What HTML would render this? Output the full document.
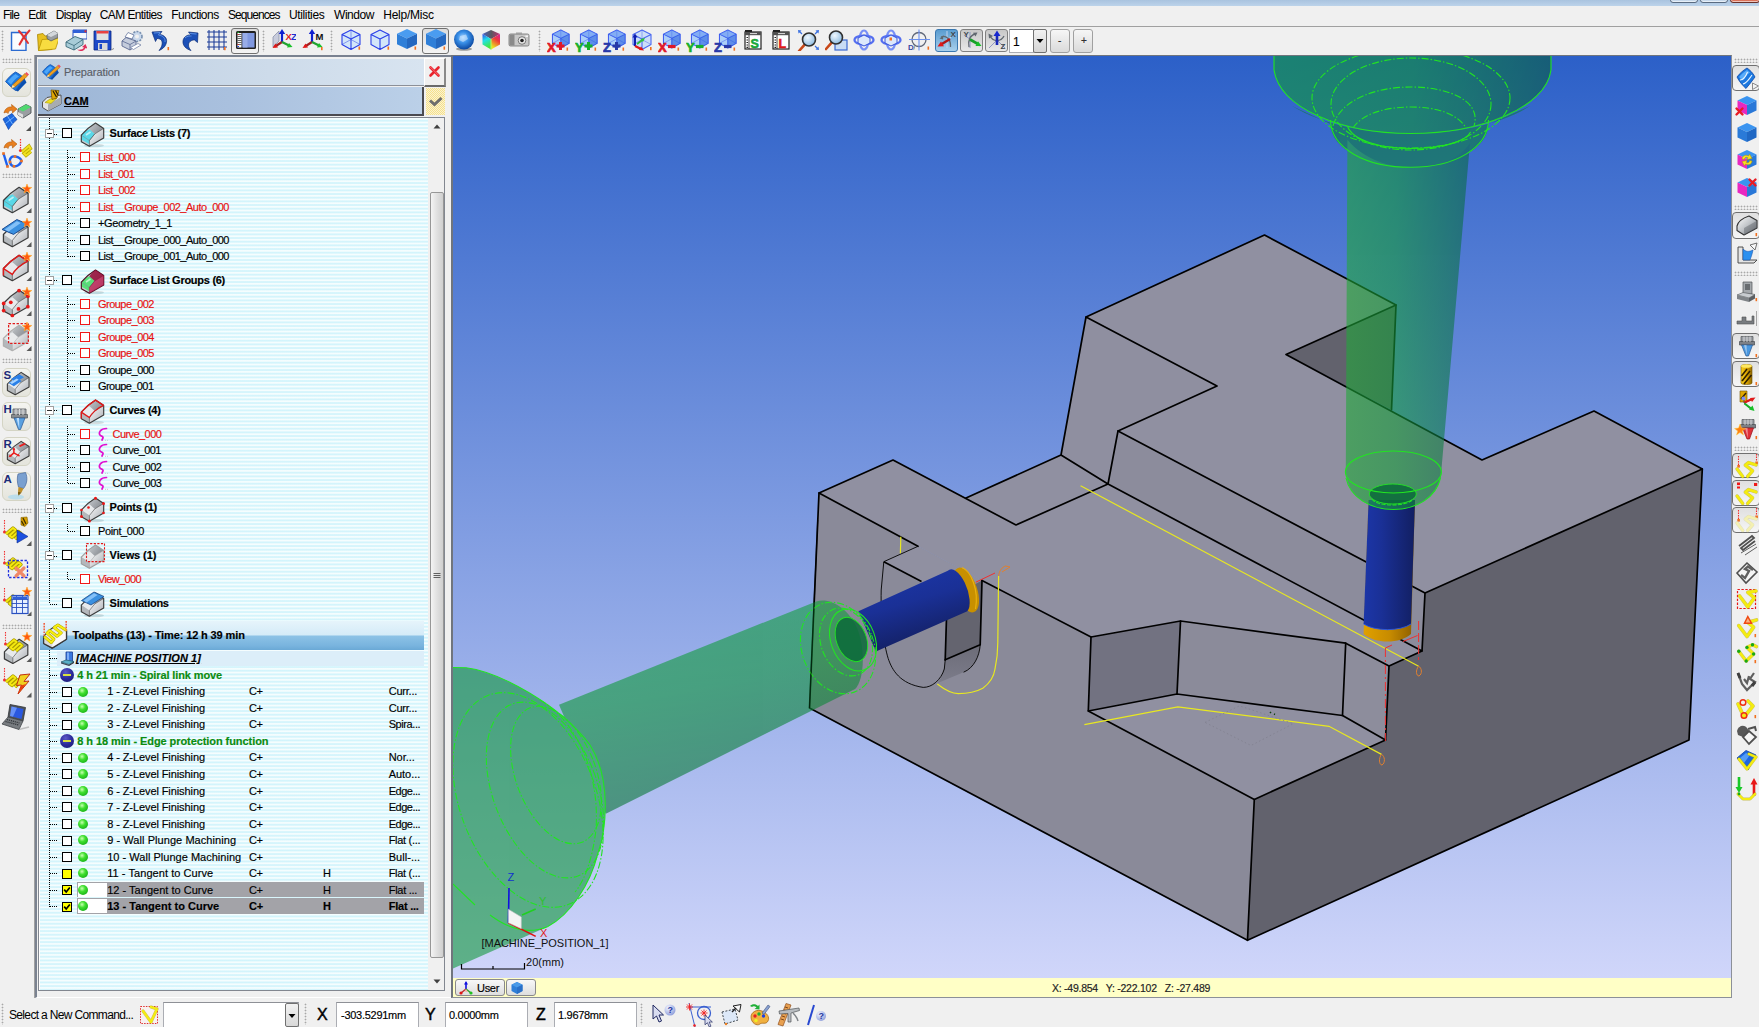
<!DOCTYPE html>
<html lang="en">
<head>
<meta charset="utf-8">
<title>CAM Workspace</title>
<style>
*{box-sizing:border-box;margin:0;padding:0}
html,body{width:1759px;height:1027px;overflow:hidden;background:#f0f0f0;font-family:"Liberation Sans",sans-serif;font-size:11px;color:#000}
.abs{position:absolute}
#app{position:relative;width:1759px;height:1027px;overflow:hidden;background:#f0f0f0}
#titlestrip{left:0;top:0;width:1759px;height:6px;background:linear-gradient(#a9c3df,#bcd3ea)}
.winbtn{top:-6px;height:9px;border:1px solid #5a6b80;border-radius:3px;background:linear-gradient(#d4e2f1,#c3d6ea);box-shadow:inset 0 0 0 1px rgba(255,255,255,.6)}
#menubar{left:0;top:6px;width:1759px;height:20px;background:#f0f0f0}
#menubar span{-webkit-text-stroke:0.04px currentColor;position:absolute;top:2px;font-size:12px;letter-spacing:-0.35px;white-space:nowrap;color:#000}
#menuline{left:0;top:26px;width:1759px;height:1px;background:#a0a0a0}
#toolbar{left:0;top:27px;width:1759px;height:28px;background:#f0f0f0}
.grip-v{width:5px;height:22px;background-image:radial-gradient(circle,#a8a8a8 0.8px,transparent 1.1px);background-size:3px 3px}
.grip-h{height:5px;width:22px;background-image:radial-gradient(circle,#a8a8a8 0.8px,transparent 1.1px);background-size:3px 3px}
.tb{position:absolute;width:24px;height:24px}
.tb svg,.lt svg,.rt svg{display:block;overflow:visible}
.pressed{border:1px solid #707070;border-radius:3px;background:linear-gradient(#dcdcdc,#f4f4f4)}
.lt{position:absolute;left:2px;width:30px;height:30px}
.ltbtn{position:absolute;left:2px;width:29px;height:29px;border:1px solid #d4d4c4;border-radius:6px;background:linear-gradient(#f4f4f0,#e4e4dc)}
.rt{position:absolute;left:1733px;width:26px;height:24px}
.rtbtn{position:absolute;left:1732px;width:28px;border:1px solid #707070;border-radius:4px;background:linear-gradient(#e0e0e0,#f6f6f6)}
/* panel */
#panelframe{left:35px;top:55px;width:417px;height:943px;background:#f0f0f0;border-left:2px solid #7a8290;border-top:2px solid #7a8290;border-right:1px solid #fff;border-bottom:1px solid #fff}
#prep{left:38px;top:59px;width:386px;height:27px;background:linear-gradient(90deg,#bccde0,#cddbea 60%,#d8e4f0);border-bottom:1px solid #8c9098}
#camrow{left:38px;top:87px;width:386px;height:29px;background:linear-gradient(90deg,#9db6d6,#a9c0de 50%,#bbd0e8);border-right:2px solid #4a4a50;border-bottom:2px solid #4a4a50}
#xbtn{left:424px;top:58px;width:22px;height:29px;background:#f0f0f0;border-top:1px solid #fff;border-left:1px solid #fff;border-right:2px solid #8a8a8a;border-bottom:2px solid #6a6a6a}
#chkbtn{left:426px;top:88px;width:19px;height:27px;background-color:#f7e7a0;background-image:conic-gradient(#fbf3d0 25%,#f5e08c 0 50%,#fbf3d0 0 75%,#f5e08c 0);background-size:2px 2px}
#tree{left:38px;top:117px;width:407px;height:874px;border:1px solid #828790;background-color:#fff;overflow:hidden}
#treebg{left:1px;top:-1.07px;width:388px;height:876px;background-image:repeating-linear-gradient(#d2f4fc 0,#d6f5fc 0.5px,#f5fdfe 1.5px,#f5fdfe 2.2px,#d6f5fc 3.2px,#d2f4fc 3.667px)}
#scroll{left:389px;top:0px;width:17px;height:872px;background:#f0f0f0}
#thumb{left:391px;top:74px;width:14px;height:766px;border:1px solid #979797;border-radius:2px;background:linear-gradient(90deg,#f4f4f4,#e0e0e0 50%,#cfcfcf)}
.row{position:absolute;left:0;height:16px;white-space:nowrap}
.cb{position:absolute;width:10px;height:10px;border:1px solid #000;background:#fff}
.cb.r{border-color:#f01818}
.cb.y{background:#ffff00}
.t{-webkit-text-stroke:0.16px currentColor;position:absolute;font-size:11px;white-space:nowrap;line-height:14px;letter-spacing:-0.25px}
.red{color:#e81010}
.b{font-weight:bold}
.grn{color:#0a8a10}
.dv{position:absolute;width:1px;background-image:linear-gradient(#000 50%,transparent 50%);background-size:1px 2px}
.dh{position:absolute;height:1px;background-image:linear-gradient(90deg,#000 50%,transparent 50%);background-size:2px 1px}
.ball{position:absolute;width:10px;height:10px;border-radius:50%;background:radial-gradient(circle at 40% 35%,#c8ffb0 0,#40e030 35%,#18b018 80%,#109010 100%)}
.minus{position:absolute;width:14px;height:14px;border-radius:50%;background:radial-gradient(circle at 40% 30%,#5a5ac8 0,#2a2a9a 50%,#18186a 100%)}
.minus i{position:absolute;left:3px;top:6px;width:8px;height:2px;background:#d8e040}
/* bottom */
#bottombar{left:0;top:998px;width:1759px;height:29px;background:#f0f0f0}
.inp{position:absolute;top:1002px;height:26px;background:#fff;border:1px solid #abadb3;border-top-color:#8e9096}
.lbl{position:absolute;font-size:16px;top:1006px;color:#000;-webkit-text-stroke:0.45px #000}
#statusbar{left:453px;top:978px;width:1277.5px;height:19px;background:#ffffc6}
#vpborder{left:451px;top:55px;width:1281px;height:943px;border-left:2px solid #70757d;border-top:1px solid #70757d;border-right:1px solid #8c9098;border-bottom:1px solid #8c9098}
#vp{left:453px;top:56px;width:1277.5px;height:922px;overflow:hidden;background:linear-gradient(#2c60c8,#d0d6fa)}
</style>
</head>
<body>
<div id="app">
<div id="titlestrip" class="abs"></div>
<div class="abs winbtn" style="left:1670px;width:28px;"></div>
<div class="abs winbtn" style="left:1700px;width:28px;"></div>
<div class="abs winbtn" style="left:1730px;width:30px;background:linear-gradient(#e8a090,#d8664c);border-color:#6a3028;"></div>
<div id="menubar" class="abs">
<span style="left:3px;letter-spacing:-0.83px">File</span>
<span style="left:28.3px;letter-spacing:-0.82px">Edit</span>
<span style="left:55.7px;letter-spacing:-0.65px">Display</span>
<span style="left:99.8px;letter-spacing:-0.60px">CAM Entities</span>
<span style="left:171.3px;letter-spacing:-0.52px">Functions</span>
<span style="left:228px;letter-spacing:-0.94px">Sequences</span>
<span style="left:289px;letter-spacing:-0.37px">Utilities</span>
<span style="left:334px;letter-spacing:-0.45px">Window</span>
<span style="left:383.3px;letter-spacing:-0.26px">Help/Misc</span>
</div>
<div id="menuline" class="abs"></div>
<div id="toolbar" class="abs"></div>
<div id="panelframe" class="abs"></div>
<div id="prep" class="abs"><svg class="abs" style="left:2px;top:2px" width="22" height="22" viewBox="0 0 28 26"><path d="M3 13 C6 9 9 6 13 3.5 C16 5 19 7 22 10 C19 14 16 18 13 22 C9 19 6 16 3 13Z" fill="#1c78e0" stroke="#0c4aa8" stroke-width="0.8"/><path d="M5 13 C8 9.5 10 7.5 13 5.5 L16.5 8 C13 10 11 12.5 8.5 16Z" fill="#58b0ff" opacity="0.8"/><path d="M13 22 C16 18 19 14 22 10 L24 14 C21 17 18 20 15.5 23Z" fill="#0c50b0"/><path d="M10 16.5 L22.5 5 L25 7.5 L12.5 18.5 L9 19.5Z" fill="#f0a020" stroke="#a86000" stroke-width="0.6"/><path d="M22.5 5 L24 3.5 L26.5 6 L25 7.5Z" fill="#f05060"/><path d="M10 16.5 L12.5 18.5 L9 19.5Z" fill="#f8e8c0"/></svg><span class="t" style="left:26px;top:6px;font-size:11px;color:#5a6068;letter-spacing:-0.1px">Preparation</span></div>
<div id="camrow" class="abs"><svg class="abs" style="left:3px;top:2px" width="22" height="24" viewBox="0 0 22 24"><path d="M1.500 13 L6 8.500 L20 6 L20 15 L7 22 L1.500 18.500Z" fill="#e4e4e4" stroke="#505050" stroke-width="1"/><path d="M7 15.500 L20 8 L20 15 L7 22Z" fill="#a8acb0"/><path d="M4 13.500 L9 10 L16 9 L10 14.500Z" fill="#f0e020" stroke="#a89800" stroke-width="0.600"/><path d="M10 1 L18 1.500 L16 9 L11 10.500Z" fill="#e0a800" stroke="#705000" stroke-width="0.700"/><path d="M12 2 L15.500 8 M14.500 1.500 L17 6" stroke="#302000" stroke-width="1.300"/></svg><span class="t b" style="left:26px;top:7px;font-size:11px;text-decoration:underline;letter-spacing:-0.2px">CAM</span></div>
<div id="xbtn" class="abs"><svg width="19" height="26" viewBox="0 0 19 26"><path d="M5.5 8.5 L13.5 16.5 M13.5 8.5 L5.5 16.5" stroke="#e8242c" stroke-width="2.6" stroke-linecap="round"/><path d="M5.5 8.2 L13.5 16.2" stroke="#ff8088" stroke-width="0.8" stroke-linecap="round"/></svg></div>
<div id="chkbtn" class="abs"><svg width="19" height="27" viewBox="0 0 19 27"><path d="M4 12.5 L8.5 16.5 L15.5 10" fill="none" stroke="#6e6e6e" stroke-width="3"/></svg></div>
<div id="bottombar" class="abs"></div>
<div class="abs grip-v" style="left:1px;top:1003px;width:3px;height:22px"></div>
<span class="abs" style="left:9px;top:1008px;font-size:12px;letter-spacing:-0.66px;white-space:nowrap">Select a New Command...</span>
<div class="inp" style="left:163px;width:136px"></div>
<div class="abs" style="left:285px;top:1003px;width:14px;height:24px;border:1px solid #707070;border-radius:2px;background:linear-gradient(#f2f2f2,#d8d8d8)"><svg width="12" height="22"><path d="M2.5 10 L9.5 10 L6 14 Z" fill="#000"/></svg></div>
<div class="abs grip-v" style="left:304px;top:1003px;width:3px;height:22px"></div>
<span class="lbl" style="left:317px">X</span>
<div class="inp" style="left:336px;width:83px"><span class="t" style="left:4px;top:5px;letter-spacing:-0.27px">-303.5291mm</span></div>
<span class="lbl" style="left:425px">Y</span>
<div class="inp" style="left:445px;width:83px"><span class="t" style="left:3px;top:5px;letter-spacing:-0.3px">0.0000mm</span></div>
<span class="lbl" style="left:536px">Z</span>
<div class="inp" style="left:554px;width:83px"><span class="t" style="left:3px;top:5px;letter-spacing:-0.3px">1.9678mm</span></div>
<div class="abs grip-v" style="left:640px;top:1003px;width:3px;height:22px"></div>
<div id="vpborder" class="abs"></div>
<div id="statusbar" class="abs"><span class="t" style="left:599px;top:3px;font-size:10.5px;letter-spacing:-0.25px;color:#222">X: -49.854&nbsp;&nbsp; Y: -222.102&nbsp;&nbsp; Z: -27.489</span>
<div class="abs" style="left:2px;top:1px;width:50px;height:17px;border:1px solid #8a8a8a;border-radius:3px;background:linear-gradient(#f8f8f8,#dedede)"><svg class="abs" style="left:3px;top:1px" width="14" height="14" viewBox="0 0 14 14"><path d="M7 8 L7 1.5" stroke="#1010e0" stroke-width="1.6"/><path d="M7 0 L5 3.5 L9 3.5Z" fill="#1010e0"/><path d="M7 8 L2 12" stroke="#c03030" stroke-width="1.6"/><circle cx="2" cy="12" r="1.6" fill="#e01818"/><path d="M7 8 L12 12" stroke="#30a030" stroke-width="1.6"/><circle cx="12" cy="12" r="1.6" fill="#20c020"/><path d="M7 8 L9 11 L5.5 10.5Z" fill="#f0b0a0"/></svg><span class="t" style="left:21px;top:1px;letter-spacing:-0.3px">User</span></div>
<div class="abs" style="left:53px;top:1px;width:30px;height:17px;border:1px solid #8a8a8a;border-radius:3px;background:linear-gradient(#f8f8f8,#dedede)"><svg class="abs" style="left:3px;top:1px" width="14" height="14" viewBox="0 0 14 14"><path d="M7 1 L12.5 3.8 L12.5 10 L7 13 L1.5 10 L1.5 3.8Z" fill="#2f7fd8"/><path d="M7 1 L12.5 3.8 L7 6.5 L1.5 3.8Z" fill="#4a9ae8"/><path d="M7 6.5 L12.5 3.8 L12.5 10 L7 13Z" fill="#2a70c8"/></svg></div>
</div>
<div id="tree" class="abs">
<div id="treebg" class="abs"></div>
<div class="dv" style="left:10px;top:0px;height:486px"></div>
<div class="abs" style="left:6px;top:11.2px;width:9px;height:9px;border:1px solid #a0a0a0;background:#fff"><div class="abs" style="left:1px;top:3px;width:5px;height:1px;background:#303030"></div></div>
<div class="dh" style="left:15px;top:16px;width:4px"></div>
<div class="cb " style="left:23.0px;top:10.2px"></div>
<div class="abs" style="left:41px;top:3.2px;width:26px;height:26px"><svg width="26" height="27" viewBox="0 0 26 27"><defs><linearGradient id="g1" x1="0" y1="0" x2="1" y2="1"><stop offset="0" stop-color="#ffffff"/><stop offset="1" stop-color="#a8acb2"/></linearGradient><linearGradient id="g2" x1="0" y1="0" x2="1" y2="0.6"><stop offset="0" stop-color="#c4c8cc"/><stop offset="1" stop-color="#888c92"/></linearGradient></defs><ellipse cx="14" cy="24.5" rx="10" ry="1.8" fill="#000" opacity="0.12"/><path d="M1.3 14.1 C4 11 10 5.5 15.5 2.1 L23.7 7.4 L23.7 17.1 L9.4 25.2 L1.3 20.8 Z" fill="#c8ccd0"/><path d="M15.5 2.1 L23.7 7.4 L14.7 13 L9.4 8.3 C11 6 13 4 15.5 2.1Z" fill="url(#g2)"/><path d="M14.7 13 L23.7 7.4 L23.7 17.1 L9.4 25.2 L9.4 19.5 Z" fill="url(#g1)"/><path d="M1.3 14.1 C3 12 6 10 9.4 8.3 L14.7 13 L9.4 19.5 Z" fill="#5ad8e8"/><path d="M1.3 14.1 L9.4 19.5 L9.4 25.2 L1.3 20.8 Z" fill="#5ad8e8"/><path d="M1.3 18.5 L9.4 23.2 L9.4 25.2 L1.3 20.8Z" fill="#c8ccd0"/><path d="M6 14 L10.5 11" stroke="#fff" stroke-width="1.6" opacity="0.6"/><path d="M1.3 14.1 L9.4 19.5 L14.7 13" fill="none" stroke="#688" stroke-width="0.5"/><path d="M1.3 14.1 C4 11 10 5.5 15.5 2.1 L23.7 7.4 L23.7 17.1 L9.4 25.2 L1.3 20.8 Z" fill="none" stroke="#3c3c3c" stroke-width="1.15" stroke-linejoin="round"/><path d="M9.4 19.5 L14.7 13 L23.7 7.4 M9.4 19.5 V25.2" fill="none" stroke="#3c3c3c" stroke-width="0.7" opacity="0.75"/></svg></div>
<span class="t" style="left:70.6px;top:8.1px;font-size:11px;letter-spacing:-0.30px;font-weight:bold;">Surface Lists (7)</span>
<div class="dv" style="left:28px;top:32px;height:108px"></div>
<div class="dh" style="left:29px;top:39px;width:8px"></div>
<div class="cb r" style="left:41.0px;top:34.0px"></div>
<span class="t" style="left:59.0px;top:32.0px;font-size:11px;letter-spacing:-0.57px;color:#e81010;">List_000</span>
<div class="dh" style="left:29px;top:56px;width:8px"></div>
<div class="cb r" style="left:41.0px;top:50.6px"></div>
<span class="t" style="left:59.0px;top:48.5px;font-size:11px;letter-spacing:-0.67px;color:#e81010;">List_001</span>
<div class="dh" style="left:29px;top:72px;width:8px"></div>
<div class="cb r" style="left:41.0px;top:67.1px"></div>
<span class="t" style="left:59.0px;top:65.1px;font-size:11px;letter-spacing:-0.57px;color:#e81010;">List_002</span>
<div class="dh" style="left:29px;top:89px;width:8px"></div>
<div class="cb r" style="left:41.0px;top:83.7px"></div>
<span class="t" style="left:59.0px;top:81.6px;font-size:11px;letter-spacing:-0.51px;color:#e81010;">List__Groupe_002_Auto_000</span>
<div class="dh" style="left:29px;top:105px;width:8px"></div>
<div class="cb " style="left:41.0px;top:100.2px"></div>
<span class="t" style="left:59.0px;top:98.2px;font-size:11px;letter-spacing:-0.40px;">+Geometry_1_1</span>
<div class="dh" style="left:29px;top:122px;width:8px"></div>
<div class="cb " style="left:41.0px;top:116.8px"></div>
<span class="t" style="left:59.0px;top:114.7px;font-size:11px;letter-spacing:-0.51px;">List__Groupe_000_Auto_000</span>
<div class="dh" style="left:29px;top:138px;width:8px"></div>
<div class="cb " style="left:41.0px;top:133.3px"></div>
<span class="t" style="left:59.0px;top:131.3px;font-size:11px;letter-spacing:-0.51px;">List__Groupe_001_Auto_000</span>
<div class="abs" style="left:6px;top:157.7px;width:9px;height:9px;border:1px solid #a0a0a0;background:#fff"><div class="abs" style="left:1px;top:3px;width:5px;height:1px;background:#303030"></div></div>
<div class="dh" style="left:15px;top:162px;width:4px"></div>
<div class="cb " style="left:23.0px;top:156.7px"></div>
<div class="abs" style="left:41px;top:149.7px;width:26px;height:26px"><svg width="26" height="27" viewBox="0 0 26 27"><defs><linearGradient id="g3" x1="0" y1="0" x2="1" y2="1"><stop offset="0" stop-color="#ffffff"/><stop offset="1" stop-color="#a8acb2"/></linearGradient><linearGradient id="g4" x1="0" y1="0" x2="1" y2="0.6"><stop offset="0" stop-color="#c4c8cc"/><stop offset="1" stop-color="#888c92"/></linearGradient></defs><ellipse cx="14" cy="24.5" rx="10" ry="1.8" fill="#000" opacity="0.12"/><path d="M1.3 14.1 C4 11 10 5.5 15.5 2.1 L23.7 7.4 L23.7 17.1 L9.4 25.2 L1.3 20.8 Z" fill="#c8ccd0"/><path d="M15.5 2.1 L23.7 7.4 L14.7 13 L9.4 8.3 C11 6 13 4 15.5 2.1Z" fill="url(#g4)"/><path d="M14.7 13 L23.7 7.4 L23.7 17.1 L9.4 25.2 L9.4 19.5 Z" fill="url(#g3)"/><path d="M1.3 14.1 C3 12 6 10 9.4 8.3 L14.7 13 L9.4 19.5 Z" fill="#58e078"/><path d="M1.3 14.1 L9.4 19.5 L9.4 25.2 L1.3 20.8 Z" fill="#58e078"/><path d="M1.3 18.5 L9.4 23.2 L9.4 25.2 L1.3 20.8Z" fill="#c8ccd0"/><path d="M6 14 L10.5 11" stroke="#fff" stroke-width="1.6" opacity="0.6"/><path d="M1.3 14.1 L9.4 19.5 L14.7 13" fill="none" stroke="#688" stroke-width="0.5"/><path d="M1.3 14.1 C4 11 10 5.5 15.5 2.1 L23.7 7.4 L23.7 17.1 L9.4 25.2 L1.3 20.8 Z" fill="none" stroke="#481020" stroke-width="1.15" stroke-linejoin="round"/><path d="M9.4 19.5 L14.7 13 L23.7 7.4 M9.4 19.5 V25.2" fill="none" stroke="#481020" stroke-width="0.7" opacity="0.75"/><path d="M15.5 2.1 L23.7 7.4 L23.7 17.1 L9.4 25.2 L9.4 19.5 L14.7 13 L9.4 8.3 C11 6 13 4 15.5 2.1Z" fill="#b8184c" opacity="0.8"/><path d="M15.5 2.1 L23.7 7.4 L14.7 13 L9.4 8.3Z" fill="#700828" opacity="0.35"/></svg></div>
<span class="t" style="left:70.6px;top:154.6px;font-size:11px;letter-spacing:-0.27px;font-weight:bold;">Surface List Groups (6)</span>
<div class="dv" style="left:28px;top:178px;height:91px"></div>
<div class="dh" style="left:29px;top:186px;width:8px"></div>
<div class="cb r" style="left:41.0px;top:180.5px"></div>
<span class="t" style="left:59.0px;top:178.5px;font-size:11px;letter-spacing:-0.52px;color:#e81010;">Groupe_002</span>
<div class="dh" style="left:29px;top:202px;width:8px"></div>
<div class="cb r" style="left:41.0px;top:197.1px"></div>
<span class="t" style="left:59.0px;top:195.0px;font-size:11px;letter-spacing:-0.52px;color:#e81010;">Groupe_003</span>
<div class="dh" style="left:29px;top:219px;width:8px"></div>
<div class="cb r" style="left:41.0px;top:213.6px"></div>
<span class="t" style="left:59.0px;top:211.6px;font-size:11px;letter-spacing:-0.52px;color:#e81010;">Groupe_004</span>
<div class="dh" style="left:29px;top:235px;width:8px"></div>
<div class="cb r" style="left:41.0px;top:230.1px"></div>
<span class="t" style="left:59.0px;top:228.1px;font-size:11px;letter-spacing:-0.52px;color:#e81010;">Groupe_005</span>
<div class="dh" style="left:29px;top:252px;width:8px"></div>
<div class="cb " style="left:41.0px;top:246.7px"></div>
<span class="t" style="left:59.0px;top:244.7px;font-size:11px;letter-spacing:-0.52px;">Groupe_000</span>
<div class="dh" style="left:29px;top:268px;width:8px"></div>
<div class="cb " style="left:41.0px;top:263.2px"></div>
<span class="t" style="left:59.0px;top:261.2px;font-size:11px;letter-spacing:-0.57px;">Groupe_001</span>
<div class="abs" style="left:6px;top:287.9px;width:9px;height:9px;border:1px solid #a0a0a0;background:#fff"><div class="abs" style="left:1px;top:3px;width:5px;height:1px;background:#303030"></div></div>
<div class="dh" style="left:15px;top:292px;width:4px"></div>
<div class="cb " style="left:23.0px;top:286.9px"></div>
<div class="abs" style="left:41px;top:279.9px;width:26px;height:26px"><svg width="26" height="27" viewBox="0 0 26 27"><defs><linearGradient id="g5" x1="0" y1="0" x2="1" y2="1"><stop offset="0" stop-color="#ffffff"/><stop offset="1" stop-color="#a8acb2"/></linearGradient><linearGradient id="g6" x1="0" y1="0" x2="1" y2="0.6"><stop offset="0" stop-color="#c4c8cc"/><stop offset="1" stop-color="#888c92"/></linearGradient></defs><ellipse cx="14" cy="24.5" rx="10" ry="1.8" fill="#000" opacity="0.12"/><path d="M1.3 14.1 C4 11 10 5.5 15.5 2.1 L23.7 7.4 L23.7 17.1 L9.4 25.2 L1.3 20.8 Z" fill="#c8ccd0"/><path d="M15.5 2.1 L23.7 7.4 L14.7 13 L9.4 8.3 C11 6 13 4 15.5 2.1Z" fill="url(#g6)"/><path d="M14.7 13 L23.7 7.4 L23.7 17.1 L9.4 25.2 L9.4 19.5 Z" fill="url(#g5)"/><path d="M1.3 14.1 C3 12 6 10 9.4 8.3 L14.7 13 L9.4 19.5 Z" fill="#e8eaec"/><path d="M1.3 14.1 L9.4 19.5 L9.4 25.2 L1.3 20.8 Z" fill="#b4b8bc"/><path d="M1.3 14.1 C4 11 10 5.5 15.5 2.1 L23.7 7.4 L23.7 17.1 L9.4 25.2 L1.3 20.8 Z" fill="none" stroke="#3c3c3c" stroke-width="1.15" stroke-linejoin="round"/><path d="M9.4 19.5 L14.7 13 L23.7 7.4 M9.4 19.5 V25.2" fill="none" stroke="#3c3c3c" stroke-width="0.7" opacity="0.75"/><path d="M1.3 20.5 L1.3 14.1 C4 11 10 5.5 15.5 2.1 L23.7 7.4 M1.3 14.1 L9.4 19.5 C11 16 17 10 23.7 7.4" fill="none" stroke="#e01818" stroke-width="1.3"/></svg></div>
<span class="t" style="left:70.6px;top:284.8px;font-size:11px;letter-spacing:-0.28px;font-weight:bold;">Curves (4)</span>
<div class="dv" style="left:28px;top:308px;height:58px"></div>
<div class="dh" style="left:29px;top:316px;width:8px"></div>
<div class="cb r" style="left:41.0px;top:310.7px"></div>
<div class="abs" style="left:58px;top:308.7px;width:12px;height:14px"><svg width="12" height="14" viewBox="0 0 12 14"><path d="M9.5 1.5 C3 1.5 1.5 6 3 8 C4 9.5 6.5 9 6 11 L5 13" fill="none" stroke="#e010d0" stroke-width="1.7" stroke-linecap="round"/><path d="M8 13.3h3" stroke="#c0c0c0" stroke-width="0.8" stroke-dasharray="1 1"/></svg></div>
<span class="t" style="left:73.5px;top:308.7px;font-size:11px;letter-spacing:-0.56px;color:#e81010;">Curve_000</span>
<div class="dh" style="left:29px;top:332px;width:8px"></div>
<div class="cb " style="left:41.0px;top:327.2px"></div>
<div class="abs" style="left:58px;top:325.2px;width:12px;height:14px"><svg width="12" height="14" viewBox="0 0 12 14"><path d="M9.5 1.5 C3 1.5 1.5 6 3 8 C4 9.5 6.5 9 6 11 L5 13" fill="none" stroke="#e010d0" stroke-width="1.7" stroke-linecap="round"/><path d="M8 13.3h3" stroke="#c0c0c0" stroke-width="0.8" stroke-dasharray="1 1"/></svg></div>
<span class="t" style="left:73.5px;top:325.2px;font-size:11px;letter-spacing:-0.62px;">Curve_001</span>
<div class="dh" style="left:29px;top:349px;width:8px"></div>
<div class="cb " style="left:41.0px;top:343.8px"></div>
<div class="abs" style="left:58px;top:341.8px;width:12px;height:14px"><svg width="12" height="14" viewBox="0 0 12 14"><path d="M9.5 1.5 C3 1.5 1.5 6 3 8 C4 9.5 6.5 9 6 11 L5 13" fill="none" stroke="#e010d0" stroke-width="1.7" stroke-linecap="round"/><path d="M8 13.3h3" stroke="#c0c0c0" stroke-width="0.8" stroke-dasharray="1 1"/></svg></div>
<span class="t" style="left:73.5px;top:341.8px;font-size:11px;letter-spacing:-0.56px;">Curve_002</span>
<div class="dh" style="left:29px;top:365px;width:8px"></div>
<div class="cb " style="left:41.0px;top:360.4px"></div>
<div class="abs" style="left:58px;top:358.4px;width:12px;height:14px"><svg width="12" height="14" viewBox="0 0 12 14"><path d="M9.5 1.5 C3 1.5 1.5 6 3 8 C4 9.5 6.5 9 6 11 L5 13" fill="none" stroke="#e010d0" stroke-width="1.7" stroke-linecap="round"/><path d="M8 13.3h3" stroke="#c0c0c0" stroke-width="0.8" stroke-dasharray="1 1"/></svg></div>
<span class="t" style="left:73.5px;top:358.3px;font-size:11px;letter-spacing:-0.56px;">Curve_003</span>
<div class="abs" style="left:6px;top:385.5px;width:9px;height:9px;border:1px solid #a0a0a0;background:#fff"><div class="abs" style="left:1px;top:3px;width:5px;height:1px;background:#303030"></div></div>
<div class="dh" style="left:15px;top:390px;width:4px"></div>
<div class="cb " style="left:23.0px;top:384.5px"></div>
<div class="abs" style="left:41px;top:377.5px;width:26px;height:26px"><svg width="26" height="27" viewBox="0 0 26 27"><defs><linearGradient id="g7" x1="0" y1="0" x2="1" y2="1"><stop offset="0" stop-color="#ffffff"/><stop offset="1" stop-color="#a8acb2"/></linearGradient><linearGradient id="g8" x1="0" y1="0" x2="1" y2="0.6"><stop offset="0" stop-color="#c4c8cc"/><stop offset="1" stop-color="#888c92"/></linearGradient></defs><ellipse cx="14" cy="24.5" rx="10" ry="1.8" fill="#000" opacity="0.12"/><path d="M1.3 14.1 C4 11 10 5.5 15.5 2.1 L23.7 7.4 L23.7 17.1 L9.4 25.2 L1.3 20.8 Z" fill="#c8ccd0"/><path d="M15.5 2.1 L23.7 7.4 L14.7 13 L9.4 8.3 C11 6 13 4 15.5 2.1Z" fill="url(#g8)"/><path d="M14.7 13 L23.7 7.4 L23.7 17.1 L9.4 25.2 L9.4 19.5 Z" fill="url(#g7)"/><path d="M1.3 14.1 C3 12 6 10 9.4 8.3 L14.7 13 L9.4 19.5 Z" fill="#e8eaec"/><path d="M1.3 14.1 L9.4 19.5 L9.4 25.2 L1.3 20.8 Z" fill="#b4b8bc"/><path d="M1.3 14.1 C4 11 10 5.5 15.5 2.1 L23.7 7.4 L23.7 17.1 L9.4 25.2 L1.3 20.8 Z" fill="none" stroke="#3c3c3c" stroke-width="1.15" stroke-linejoin="round"/><path d="M9.4 19.5 L14.7 13 L23.7 7.4 M9.4 19.5 V25.2" fill="none" stroke="#3c3c3c" stroke-width="0.7" opacity="0.75"/><g fill="#e81818"><circle cx="1.5" cy="20.5" r="1.5"/><circle cx="15.5" cy="2.3" r="1.5"/><circle cx="23.5" cy="7.6" r="1.5"/><circle cx="9.4" cy="25" r="1.5"/><circle cx="8.5" cy="11.5" r="1.3"/><circle cx="23.5" cy="17" r="1.3"/><circle cx="1.5" cy="14" r="1.3"/></g></svg></div>
<span class="t" style="left:70.6px;top:382.4px;font-size:11px;letter-spacing:-0.28px;font-weight:bold;">Points (1)</span>
<div class="dv" style="left:28px;top:406px;height:8px"></div>
<div class="dh" style="left:29px;top:413px;width:8px"></div>
<div class="cb " style="left:41.0px;top:408.3px"></div>
<span class="t" style="left:59.0px;top:406.3px;font-size:11px;letter-spacing:-0.39px;">Point_000</span>
<div class="abs" style="left:6px;top:433.2px;width:9px;height:9px;border:1px solid #a0a0a0;background:#fff"><div class="abs" style="left:1px;top:3px;width:5px;height:1px;background:#303030"></div></div>
<div class="dh" style="left:15px;top:438px;width:4px"></div>
<div class="cb " style="left:23.0px;top:432.2px"></div>
<div class="abs" style="left:41px;top:425.2px;width:26px;height:26px"><svg width="26" height="27" viewBox="0 0 26 27"><defs><linearGradient id="g9" x1="0" y1="0" x2="1" y2="1"><stop offset="0" stop-color="#ffffff"/><stop offset="1" stop-color="#a8acb2"/></linearGradient><linearGradient id="g10" x1="0" y1="0" x2="1" y2="0.6"><stop offset="0" stop-color="#c4c8cc"/><stop offset="1" stop-color="#888c92"/></linearGradient></defs><path d="M1.3 14.1 C4 11 10 5.5 15.5 2.1 L23.7 7.4 L23.7 17.1 L9.4 25.2 L1.3 20.8 Z" fill="#c8ccd0"/><path d="M15.5 2.1 L23.7 7.4 L14.7 13 L9.4 8.3 C11 6 13 4 15.5 2.1Z" fill="url(#g10)"/><path d="M14.7 13 L23.7 7.4 L23.7 17.1 L9.4 25.2 L9.4 19.5 Z" fill="url(#g9)"/><path d="M1.3 14.1 C3 12 6 10 9.4 8.3 L14.7 13 L9.4 19.5 Z" fill="#e8eaec"/><path d="M1.3 14.1 L9.4 19.5 L9.4 25.2 L1.3 20.8 Z" fill="#b4b8bc"/><path d="M1.3 14.1 C4 11 10 5.5 15.5 2.1 L23.7 7.4 L23.7 17.1 L9.4 25.2 L1.3 20.8 Z" fill="none" stroke="#a0a0a0" stroke-width="1.15" stroke-linejoin="round"/><path d="M9.4 19.5 L14.7 13 L23.7 7.4 M9.4 19.5 V25.2" fill="none" stroke="#a0a0a0" stroke-width="0.7" opacity="0.75"/><rect x="6.5" y="0.6" width="18" height="18" fill="none" stroke="#e01818" stroke-width="1.1" stroke-dasharray="2.2 1.4"/></svg></div>
<span class="t" style="left:70.6px;top:430.1px;font-size:11px;letter-spacing:-0.09px;font-weight:bold;">Views (1)</span>
<div class="dv" style="left:28px;top:454px;height:8px"></div>
<div class="dh" style="left:29px;top:461px;width:8px"></div>
<div class="cb r" style="left:41.0px;top:456.0px"></div>
<span class="t" style="left:59.0px;top:454.0px;font-size:11px;letter-spacing:-0.64px;color:#e81010;">View_000</span>
<div class="dh" style="left:11px;top:486px;width:8px"></div>
<div class="cb " style="left:23.0px;top:480.1px"></div>
<div class="abs" style="left:41px;top:473.1px;width:26px;height:26px"><svg width="26" height="27" viewBox="0 0 26 27"><defs><linearGradient id="g11" x1="0" y1="0" x2="1" y2="1"><stop offset="0" stop-color="#ffffff"/><stop offset="1" stop-color="#a8acb2"/></linearGradient><linearGradient id="g12" x1="0" y1="0" x2="1" y2="0.6"><stop offset="0" stop-color="#c4c8cc"/><stop offset="1" stop-color="#888c92"/></linearGradient></defs><ellipse cx="14" cy="24.5" rx="10" ry="1.8" fill="#000" opacity="0.12"/><path d="M1.3 14.1 C4 11 10 5.5 15.5 2.1 L23.7 7.4 L23.7 17.1 L9.4 25.2 L1.3 20.8 Z" fill="#c8ccd0"/><path d="M15.5 2.1 L23.7 7.4 L14.7 13 L9.4 8.3 C11 6 13 4 15.5 2.1Z" fill="url(#g12)"/><path d="M14.7 13 L23.7 7.4 L23.7 17.1 L9.4 25.2 L9.4 19.5 Z" fill="url(#g11)"/><path d="M1.3 14.1 C3 12 6 10 9.4 8.3 L14.7 13 L9.4 19.5 Z" fill="#e8eaec"/><path d="M1.3 14.1 L9.4 19.5 L9.4 25.2 L1.3 20.8 Z" fill="#b4b8bc"/><path d="M1.3 14.1 C4 11 10 5.5 15.5 2.1 L23.7 7.4 L23.7 17.1 L9.4 25.2 L1.3 20.8 Z" fill="none" stroke="#3c3c3c" stroke-width="1.15" stroke-linejoin="round"/><path d="M9.4 19.5 L14.7 13 L23.7 7.4 M9.4 19.5 V25.2" fill="none" stroke="#3c3c3c" stroke-width="0.7" opacity="0.75"/><path d="M1.5 9.5 L14 1 L24 5.5 L11 14 Z" fill="#3a90e0" stroke="#1c4a88" stroke-width="0.8"/><path d="M3.5 9.5 L14 2.3 L17.5 4 L6.5 11.5 Z" fill="#9cd0ff" opacity="0.75"/></svg></div>
<span class="t" style="left:70.6px;top:478.0px;font-size:11px;letter-spacing:-0.30px;font-weight:bold;">Simulations</span>
<div class="abs" style="left:1px;top:503px;width:384px;height:29px;background:linear-gradient(#e6f4fb 0,#d4ebf8 48%,#8cc2e6 52%,#79b4de 85%,#6aa9d6 100%)"></div>
<div class="abs" style="left:3px;top:501px;width:30px;height:32px"><svg width="30" height="32" viewBox="0 0 30 32"><path d="M1.6 17.5 C5 13 11 8 16.2 5.5 L24.5 11.6 L24.5 20.2 L10.3 29.1 L1.6 24.5 Z" fill="#e8eaec" stroke="#383838" stroke-width="1.2" stroke-linejoin="round"/><path d="M10.3 22.5 L24.5 11.6 L24.5 20.2 L10.3 29.1 Z" fill="#f8f8f8"/><path d="M1.6 17.5 L10.3 22.5 L10.3 29.1 L1.6 24.5Z" fill="#d8dadc"/><path d="M10.3 29.1 L1.6 24.5 L1.6 17.5 M10.3 29.1 L24.5 20.2 L24.5 11.6" fill="none" stroke="#383838" stroke-width="1.3" stroke-linejoin="round"/><path d="M3 18.2 L9.3 23.5 L11.9 20.2 L5 14.2 L7.6 11.6 L15.2 17.2 L19.2 13.9 L12.2 8.6 L15.9 6 L23.8 10.9" fill="none" stroke="#b8ac00" stroke-width="3" stroke-linejoin="round" stroke-linecap="round"/><path d="M3 18.2 L9.3 23.5 L11.9 20.2 L5 14.2 L7.6 11.6 L15.2 17.2 L19.2 13.9 L12.2 8.6 L15.9 6 L23.8 10.9" fill="none" stroke="#f6ee10" stroke-width="2" stroke-linejoin="round" stroke-linecap="round"/><path d="M2.2 4 V16.5 M24.2 2 V11.5" stroke="#f06040" stroke-width="1.6" stroke-dasharray="1.7 1.1"/></svg></div>
<span class="t" style="left:33.6px;top:509.6px;font-size:11px;letter-spacing:-0.12px;font-weight:bold;">Toolpaths (13) - Time: 12 h 39 min</span>
<div class="abs" style="left:18px;top:533px;width:367px;height:15px;background:#dceef9"></div>
<div class="dv" style="left:10px;top:532px;height:257px"></div>
<div class="dh" style="left:11px;top:540px;width:7px"></div>
<div class="abs" style="left:21px;top:533px;width:15px;height:15px"><svg width="15" height="15" viewBox="0 0 15 15"><path d="M6 1 L12.5 1 L12.5 11 L6 11Z" fill="#3a78e0" stroke="#1a3a90" stroke-width="0.8"/><path d="M8 1.5 V10.5" stroke="#9cc4ff" stroke-width="1.4"/><path d="M1 11 L6 9 L14 10.5 L9 13.5 Z" fill="#58b0c8" stroke="#205868" stroke-width="0.7"/><path d="M1 11.2 L9 13.7 L9 15 L1 12.5Z" fill="#3a4a58"/><path d="M9 13.7 L14 10.7 L14 12 L9 15Z" fill="#283038"/></svg></div>
<span class="t" style="left:37.0px;top:532.9px;font-size:11px;letter-spacing:0.08px;font-weight:bold;font-style:italic;text-decoration:underline;">[MACHINE POSITION 1]</span>
<div class="dh" style="left:11px;top:557px;width:7px"></div>
<div class="minus" style="left:20.5px;top:550.0px"><i></i></div>
<span class="t" style="left:38.3px;top:549.7px;font-size:11px;letter-spacing:-0.11px;font-weight:bold;color:#0c8c10;">4 h 21 min - Spiral link move</span>
<div class="dh" style="left:11px;top:574px;width:7px"></div>
<div class="cb " style="left:23.0px;top:568.7px"></div>
<div class="ball" style="left:39px;top:568.5px"></div>
<span class="t" style="left:68.2px;top:566.3px;font-size:11px;letter-spacing:-0.09px;">1 - Z-Level Finishing</span>
<span class="t" style="left:210.0px;top:566.3px;font-size:11px;letter-spacing:-0.48px;">C+</span>
<span class="t" style="left:349.7px;top:566.3px;font-size:11px;letter-spacing:-0.22px;">Curr...</span>
<div class="dh" style="left:11px;top:590px;width:7px"></div>
<div class="cb " style="left:23.0px;top:585.3px"></div>
<div class="ball" style="left:39px;top:585.1px"></div>
<span class="t" style="left:68.2px;top:582.8px;font-size:11px;letter-spacing:-0.09px;">2 - Z-Level Finishing</span>
<span class="t" style="left:210.0px;top:582.8px;font-size:11px;letter-spacing:-0.48px;">C+</span>
<span class="t" style="left:349.7px;top:582.8px;font-size:11px;letter-spacing:-0.22px;">Curr...</span>
<div class="dh" style="left:11px;top:607px;width:7px"></div>
<div class="cb " style="left:23.0px;top:601.8px"></div>
<div class="ball" style="left:39px;top:601.6px"></div>
<span class="t" style="left:68.2px;top:599.4px;font-size:11px;letter-spacing:-0.09px;">3 - Z-Level Finishing</span>
<span class="t" style="left:210.0px;top:599.4px;font-size:11px;letter-spacing:-0.48px;">C+</span>
<span class="t" style="left:349.7px;top:599.4px;font-size:11px;letter-spacing:-0.42px;">Spira...</span>
<div class="dh" style="left:11px;top:623px;width:7px"></div>
<div class="minus" style="left:20.5px;top:616.1px"><i></i></div>
<span class="t" style="left:38.3px;top:615.8px;font-size:11px;letter-spacing:-0.07px;font-weight:bold;color:#0c8c10;">8 h 18 min - Edge protection function</span>
<div class="dh" style="left:11px;top:640px;width:7px"></div>
<div class="cb " style="left:23.0px;top:634.8px"></div>
<div class="ball" style="left:39px;top:634.6px"></div>
<span class="t" style="left:68.2px;top:632.4px;font-size:11px;letter-spacing:-0.09px;">4 - Z-Level Finishing</span>
<span class="t" style="left:210.0px;top:632.4px;font-size:11px;letter-spacing:-0.48px;">C+</span>
<span class="t" style="left:349.7px;top:632.4px;font-size:11px;letter-spacing:-0.05px;">Nor...</span>
<div class="dh" style="left:11px;top:656px;width:7px"></div>
<div class="cb " style="left:23.0px;top:651.4px"></div>
<div class="ball" style="left:39px;top:651.2px"></div>
<span class="t" style="left:68.2px;top:649.0px;font-size:11px;letter-spacing:-0.09px;">5 - Z-Level Finishing</span>
<span class="t" style="left:210.0px;top:649.0px;font-size:11px;letter-spacing:-0.48px;">C+</span>
<span class="t" style="left:349.7px;top:649.0px;font-size:11px;letter-spacing:-0.04px;">Auto...</span>
<div class="dh" style="left:11px;top:673px;width:7px"></div>
<div class="cb " style="left:23.0px;top:667.9px"></div>
<div class="ball" style="left:39px;top:667.7px"></div>
<span class="t" style="left:68.2px;top:665.5px;font-size:11px;letter-spacing:-0.09px;">6 - Z-Level Finishing</span>
<span class="t" style="left:210.0px;top:665.5px;font-size:11px;letter-spacing:-0.48px;">C+</span>
<span class="t" style="left:349.7px;top:665.5px;font-size:11px;letter-spacing:-0.48px;">Edge...</span>
<div class="dh" style="left:11px;top:689px;width:7px"></div>
<div class="cb " style="left:23.0px;top:684.4px"></div>
<div class="ball" style="left:39px;top:684.2px"></div>
<span class="t" style="left:68.2px;top:682.0px;font-size:11px;letter-spacing:-0.09px;">7 - Z-Level Finishing</span>
<span class="t" style="left:210.0px;top:682.0px;font-size:11px;letter-spacing:-0.48px;">C+</span>
<span class="t" style="left:349.7px;top:682.0px;font-size:11px;letter-spacing:-0.48px;">Edge...</span>
<div class="dh" style="left:11px;top:706px;width:7px"></div>
<div class="cb " style="left:23.0px;top:701.0px"></div>
<div class="ball" style="left:39px;top:700.8px"></div>
<span class="t" style="left:68.2px;top:698.6px;font-size:11px;letter-spacing:-0.09px;">8 - Z-Level Finishing</span>
<span class="t" style="left:210.0px;top:698.6px;font-size:11px;letter-spacing:-0.48px;">C+</span>
<span class="t" style="left:349.7px;top:698.6px;font-size:11px;letter-spacing:-0.48px;">Edge...</span>
<div class="dh" style="left:11px;top:722px;width:7px"></div>
<div class="cb " style="left:23.0px;top:717.5px"></div>
<div class="ball" style="left:39px;top:717.3px"></div>
<span class="t" style="left:68.2px;top:715.1px;font-size:11px;letter-spacing:0.06px;">9 - Wall Plunge Machining</span>
<span class="t" style="left:210.0px;top:715.1px;font-size:11px;letter-spacing:-0.48px;">C+</span>
<span class="t" style="left:349.7px;top:715.1px;font-size:11px;letter-spacing:-0.30px;">Flat (...</span>
<div class="dh" style="left:11px;top:739px;width:7px"></div>
<div class="cb " style="left:23.0px;top:734.0px"></div>
<div class="ball" style="left:39px;top:733.8px"></div>
<span class="t" style="left:68.2px;top:731.6px;font-size:11px;letter-spacing:0.02px;">10 - Wall Plunge Machining</span>
<span class="t" style="left:210.0px;top:731.6px;font-size:11px;letter-spacing:-0.48px;">C+</span>
<span class="t" style="left:349.7px;top:731.6px;font-size:11px;letter-spacing:0.04px;">Bull-...</span>
<div class="dh" style="left:11px;top:755px;width:7px"></div>
<div class="cb y" style="left:23.0px;top:750.6px"></div>
<div class="ball" style="left:39px;top:750.4px"></div>
<span class="t" style="left:68.2px;top:748.1px;font-size:11px;letter-spacing:0.06px;">11 - Tangent to Curve</span>
<span class="t" style="left:210.0px;top:748.1px;font-size:11px;letter-spacing:-0.48px;">C+</span>
<span class="t" style="left:284.0px;top:748.1px;font-size:11px;letter-spacing:-0.34px;">H</span>
<span class="t" style="left:349.7px;top:748.1px;font-size:11px;letter-spacing:-0.30px;">Flat (...</span>
<div class="dh" style="left:11px;top:772px;width:7px"></div>
<div class="abs" style="left:38px;top:763.5px;width:347px;height:15.6px;background:#a3a3a8"></div>
<div class="abs" style="left:39px;top:764.5px;width:28.5px;height:14px;background:#fff"></div>
<div class="cb y" style="left:23.0px;top:767.1px"></div>
<svg class="abs" style="left:23px;top:767.1px" width="10" height="10" viewBox="0 0 10 10"><path d="M2.2 4.6 L4.2 7 L7.8 2.4" fill="none" stroke="#000" stroke-width="1.7"/></svg>
<div class="ball" style="left:39px;top:766.9px"></div>
<span class="t" style="left:68.2px;top:764.7px;font-size:11px;letter-spacing:0.02px;">12 - Tangent to Curve</span>
<span class="t" style="left:210.0px;top:764.7px;font-size:11px;letter-spacing:-0.48px;">C+</span>
<span class="t" style="left:284.0px;top:764.7px;font-size:11px;letter-spacing:-0.34px;">H</span>
<span class="t" style="left:349.7px;top:764.7px;font-size:11px;letter-spacing:-0.26px;">Flat ...</span>
<div class="dh" style="left:11px;top:788px;width:7px"></div>
<div class="abs" style="left:38px;top:780.0px;width:347px;height:15.6px;background:#a3a3a8"></div>
<div class="abs" style="left:39px;top:781.0px;width:28.5px;height:14px;background:#fff"></div>
<div class="cb y" style="left:23.0px;top:783.6px"></div>
<svg class="abs" style="left:23px;top:783.6px" width="10" height="10" viewBox="0 0 10 10"><path d="M2.2 4.6 L4.2 7 L7.8 2.4" fill="none" stroke="#000" stroke-width="1.7"/></svg>
<div class="ball" style="left:39px;top:783.4px"></div>
<span class="t" style="left:68.2px;top:781.2px;font-size:11px;letter-spacing:0.02px;font-weight:bold;">13 - Tangent to Curve</span>
<span class="t" style="left:210.0px;top:781.2px;font-size:11px;letter-spacing:-0.08px;font-weight:bold;">C+</span>
<span class="t" style="left:284.0px;top:781.2px;font-size:11px;letter-spacing:0.06px;font-weight:bold;">H</span>
<span class="t" style="left:349.7px;top:781.2px;font-size:11px;letter-spacing:-0.22px;font-weight:bold;">Flat ...</span>
<div id="scroll" class="abs"></div>
<div id="thumb" class="abs"></div>
<svg class="abs" style="left:390px;top:0" width="16" height="872" viewBox="0 0 16 872"><path d="M4.5 10.5 L8 6.5 L11.5 10.5Z" fill="#404040"/><path d="M4.5 861.5 L8 865.5 L11.5 861.5Z" fill="#404040"/><path d="M4.5 455.5h7M4.5 457.5h7M4.5 459.5h7" stroke="#606060" stroke-width="1"/></svg>
</div>
<div id="vp" class="abs">
<svg class="abs" style="left:0;top:0" width="1278" height="922" viewBox="453 56 1278 922">
<defs>
<linearGradient id="gshaft1" x1="0" x2="1" y1="0" y2="0"><stop offset="0" stop-color="#20a838"/><stop offset="0.4" stop-color="#169a3a"/><stop offset="1" stop-color="#0a6a48"/></linearGradient>
<linearGradient id="gdisc1" x1="0" x2="1" y1="0" y2="0"><stop offset="0" stop-color="#10983c"/><stop offset="0.5" stop-color="#109038"/><stop offset="1" stop-color="#0a5c44"/></linearGradient>
<linearGradient id="gshaft2" x1="0" x2="0.35" y1="0" y2="1"><stop offset="0" stop-color="#18a844"/><stop offset="0.5" stop-color="#10963a"/><stop offset="1" stop-color="#0a7038"/></linearGradient>
<linearGradient id="blue1" x1="0" x2="1" y1="0" y2="0"><stop offset="0" stop-color="#1c36a8"/><stop offset="0.35" stop-color="#1a3096"/><stop offset="1" stop-color="#121f62"/></linearGradient>
<linearGradient id="blue2" x1="0" x2="0.4" y1="0" y2="1"><stop offset="0" stop-color="#1c38ac"/><stop offset="0.5" stop-color="#1a3096"/><stop offset="1" stop-color="#131f60"/></linearGradient>
<linearGradient id="gold1" x1="0" x2="1" y1="0" y2="0"><stop offset="0" stop-color="#e0a000"/><stop offset="0.5" stop-color="#c88c00"/><stop offset="1" stop-color="#8a5c00"/></linearGradient>
<linearGradient id="slotg" x1="0" x2="0" y1="0" y2="1"><stop offset="0" stop-color="#6c6c78"/><stop offset="1" stop-color="#7c7c8a"/></linearGradient>
</defs>
<polygon points="819,493 918,546.3 982,580.5 1091,637 1088.3,711 1254.3,799.4 1247.5,940.3 809.5,708" fill="#8a8a99" />
<polygon points="819,493 893,460 966,498 1061,455 1108,484 1422,651 1389,666 1345.7,643.2 1180.5,621 1091,637 982,580.5 918,546.3" fill="#9090a1" />
<polygon points="918,546.3 982,580.5 947.5,596.3 883.8,561.7" fill="#9090a1" />
<polygon points="1061,455 1086,317 1217,386 1118,431 1108,484" fill="#8f8fa0" />
<polygon points="1118,431 1425,593 1422,651 1108,484" fill="#8c8c9c" />
<polygon points="1086,317 1264.5,235 1396,305 1286,354.5 1482,460 1594,411 1702.3,469 1425,593 1118,431 1217,386" fill="#9090a1" />
<polygon points="1286,354.5 1396,305 1391.5,410" fill="#62626d" />
<polygon points="1425,593 1702.3,469 1689,740 1247.5,940.3 1254.3,799.4 1385.5,740 1389,666 1422,651" fill="#62626d" />
<polygon points="1091,637 1180.5,621 1177,694 1088.3,711" fill="#727281" />
<polygon points="1180.5,621 1345.7,643.2 1342.5,715.5 1177,694" fill="#8b8b9a" />
<polygon points="1345.7,643.2 1389,666 1385.5,740 1342.5,715.5" fill="#8d8d9c" />
<polygon points="1088.3,711 1177,694 1342.5,715.5 1385.5,740 1254.3,799.4" fill="#9090a1" />
<path d="M946.6,600 L982,580.5 L980.2,644.8 L945.2,659.8 Z" fill="#64646f"/>
<path d="M945.2,659.8 L980.2,644.8 C979.5,656 974,668 963.6,672.2 L937.3,683.2 C941.5,679 944.5,670 945.2,659.8 Z" fill="url(#slotg)"/>
<polyline points="1086,317 1264.5,235 1396,305 1286,354.5 1482,460 1594,411 1702.3,469 1689,740 1247.5,940.3 809.5,708 819,493 893,460 1016,525 1108,484" fill="none" stroke="#000" stroke-width="1.7" stroke-linejoin="round" stroke-linecap="round"/>
<polyline points="966,498 1061,455 1086,317 1217,386 1118,431 1108,484 1061,455" fill="none" stroke="#000" stroke-width="1.7" stroke-linejoin="round" stroke-linecap="round"/>
<polyline points="1118,431 1425,593 1702.3,469" fill="none" stroke="#000" stroke-width="1.7" stroke-linejoin="round" stroke-linecap="round"/>
<polyline points="1425,593 1422,651 1108,484" fill="none" stroke="#000" stroke-width="1.7" stroke-linejoin="round" stroke-linecap="round"/>
<polyline points="1422,651 1389,666 1385.5,740 1254.3,799.4 1247.5,940.3" fill="none" stroke="#000" stroke-width="1.7" stroke-linejoin="round" stroke-linecap="round"/>
<polyline points="1396,305 1391.5,410" fill="none" stroke="#000" stroke-width="1.7" stroke-linejoin="round" stroke-linecap="round"/>
<polyline points="819,493 918,546.3" fill="none" stroke="#000" stroke-width="1.7" stroke-linejoin="round" stroke-linecap="round"/>
<polyline points="982,580.5 1091,637 1180.5,621 1345.7,643.2 1389,666" fill="none" stroke="#000" stroke-width="1.7" stroke-linejoin="round" stroke-linecap="round"/>
<polyline points="1091,637 1088.3,711 1177,694 1342.5,715.5 1385.5,740" fill="none" stroke="#000" stroke-width="1.7" stroke-linejoin="round" stroke-linecap="round"/>
<polyline points="1180.5,621 1177,694" fill="none" stroke="#000" stroke-width="1.7" stroke-linejoin="round" stroke-linecap="round"/>
<polyline points="1345.7,643.2 1342.5,715.5" fill="none" stroke="#000" stroke-width="1.7" stroke-linejoin="round" stroke-linecap="round"/>
<polyline points="1088.3,711 1254.3,799.4" fill="none" stroke="#000" stroke-width="1.7" stroke-linejoin="round" stroke-linecap="round"/>
<polyline points="982,580.5 980.2,644.8 945.2,659.8" fill="none" stroke="#000" stroke-width="1.7" stroke-linejoin="round" stroke-linecap="round"/>
<polyline points="946.6,614.7 945.2,659.8" fill="none" stroke="#000" stroke-width="1.7" stroke-linejoin="round" stroke-linecap="round"/>
<path d="M883.8,561.7 L921.5,581.4" stroke="#000" stroke-width="1.7" fill="none"/>
<path d="M918,546.3 L883.8,561.7 L881.2,590 C880.5,620 884,645 888.2,658.5 C892,670 900,684 923.2,687.4 C932,687.5 941,680 944.3,669 L945.2,660" stroke="#000" stroke-width="0.9" fill="none"/>
<path d="M980.2,644.8 C979.5,656 974,668 963.6,672.2" stroke="#000" stroke-width="0.9" fill="none"/>
<g fill="none" stroke="#e8e820" stroke-width="1.2">
<path d="M1080.6,485.7 L1418.6,666.2"/>
<path d="M1084.4,724.7 L1177.8,706.8 L1329,726.3 L1381.5,754.4"/>
<path d="M937.3,684 C945,690 952,693.6 958.3,693.6 C968,693.6 976,692 982.8,688.3 C990,683 994,676 995,669 C997,660 997.8,650 997.8,642.7 L998.6,576.1"/>
<path d="M900.8,536.7 L900.4,553.3"/>
</g>
<g fill="none" stroke="#e08030" stroke-width="1">
<path d="M998.6,576 C999,571 1002,567 1005.6,566 L1010,567 L1002,572"/>
<path d="M1418.6,666.2 C1422,668 1422.5,674 1419,676 C1416,676 1415.5,670 1418.6,666.2"/>
<path d="M1381.5,754.4 C1385,756 1385.5,763 1382,765 C1379,765 1378.5,758 1381.5,754.4"/>
</g>
<g fill="none" stroke="#f03030" stroke-width="1">
<path d="M975.8,582.2 L995,573"/>
<path d="M1385.4,648 V741" stroke-dasharray="9 3 2 3"/>
<path d="M1418.6,621 V660" stroke-dasharray="9 3"/>
<path d="M1385.4,648 L1392,645 M1403,641.5 L1417.5,635.5"/>
</g>
<path d="M1205,722.4 L1239.5,705.8 L1293.3,723.7 L1251,745.5 Z" fill="none" stroke="#80808e" stroke-width="0.8" stroke-dasharray="1.5 2.5"/>
<path d="M1270,712 l1,1 M1274,714 l1,0.5" stroke="#104010" stroke-width="1.5"/>
<ellipse cx="966" cy="590" rx="11" ry="23.5" transform="rotate(-20 966 590)" fill="#c89000"/>
<path d="M962,567.5 C971,571 979,590 975.5,609" fill="none" stroke="#e8b010" stroke-width="1.2"/>
<path d="M858.4,611.2 L947.8,570.8 A9.5,22 -20 0 1 967.3,611.2 L875.9,651.5 Z" fill="url(#blue2)"/>
<path d="M1368.6,500 L1415,500 L1411,634 C1400,644 1375,644 1363.6,634 Z" fill="url(#gold1)"/>
<path d="M1368.6,500 L1415,500 L1411,624 C1400,631.5 1375,631.5 1363.6,624 Z" fill="url(#blue1)"/>
<path d="M1363.6,624 C1375,631.5 1400,631.5 1411,624" fill="none" stroke="#2858e8" stroke-width="0.9"/>
<g opacity="0.60">
<path d="M1274,56 L1551,56 L1551,70 C1546,108 1480,133.5 1411,133.5 C1340,133.5 1280,108 1274,70 Z" fill="url(#gdisc1)"/>
<path d="M1292,106 C1325,126 1370,133.5 1411,133.5 C1455,133.5 1500,125 1530,106 L1488.5,124 C1488,148 1455,167.3 1411,167.3 C1365,167.3 1331,148 1330.5,124 Z" fill="#0c7c40"/>
<path d="M1347.4,140 C1365,160 1390,167.3 1411,167.3 C1440,167.3 1460,158 1470,143 L1441.6,467.6 C1442,472 1441,478 1439,483 C1434,498 1416,509.5 1393.4,509.5 C1371,509.5 1352,498 1348,483 C1346,478 1345.5,472 1345.8,467 Z" fill="url(#gshaft1)"/>
</g>
<ellipse cx="1392.8" cy="494" rx="23.5" ry="10" fill="#0a6a3a" opacity="0.85"/>
<g fill="none" stroke="#22e422" stroke-width="1.1">
<path d="M1274,56 L1274,70 C1280,108 1340,133.5 1411,133.5 C1480,133.5 1546,108 1551,70 L1551,56"/>
<path d="M1330.5,120 C1331,148 1365,167.3 1411,167.3 C1455,167.3 1488,148 1488.5,120"/>
<path d="M1347.4,126 C1352,140 1380,148.5 1411,148.5 C1440,148.5 1466,142 1470.6,132"/>
<g stroke-dasharray="7 2 1.5 2">
<ellipse cx="1411" cy="98" rx="99" ry="50"/>
<ellipse cx="1411" cy="104" rx="80" ry="46"/>
<path d="M1333,126 C1340,100 1375,87 1411,87 C1447,87 1482,100 1474,126"/>
<path d="M1353,128 C1362,114 1385,107 1411,107 C1437,107 1458,114 1466,128"/>
</g>
<ellipse cx="1393.4" cy="472" rx="48" ry="21"/>
<path d="M1346,478 C1350,497 1370,509.5 1393.4,509.5 C1417,509.5 1436,497 1440.5,478"/>
<ellipse cx="1392.8" cy="494" rx="23.5" ry="10" stroke-width="0.9"/>
<path d="M1372,499 C1376,507 1408,507 1413,499" stroke-dasharray="4 1.5"/>
</g>
<g opacity="0.60">
<path d="M559,704.7 L816.2,601.4 C830,597 848,608 857,628 C866,650 864,680 855.1,689 L605.8,813.7 Z" fill="url(#gshaft2)"/>
<path d="M453,667.5 L466,667.7 C500,672 560,705 590,745 C612,780 606,830 598,853 C590,885 570,915 547.4,926.7 L453,968.5 Z" fill="#12983c"/>
</g>
<ellipse cx="851.4" cy="639.5" rx="15" ry="23" transform="rotate(-21 851.4 639.5)" fill="#0a6a3a" opacity="0.85"/>
<g fill="none" stroke="#22e422" stroke-width="1.1">
<path d="M453,667.5 L466,667.7 C500,672 560,705 590,745 C612,780 606,830 598,853 C590,885 570,915 547.4,926.7"/>
<path d="M547.4,926.7 C530,934 510,930 490,915"/>
<path d="M453,884 L475,905"/>
<g stroke-dasharray="7 2 1.5 2">
<ellipse cx="528" cy="800" rx="68" ry="112" transform="rotate(-21 528 800)"/>
<ellipse cx="545" cy="790" rx="52" ry="92" transform="rotate(-21 545 790)"/>
<ellipse cx="556" cy="775" rx="40" ry="72" transform="rotate(-21 556 775)"/>
<path d="M540,700 C575,720 600,770 596,830 C592,860 585,880 575,892"/>
<ellipse cx="838" cy="648" rx="36" ry="47" transform="rotate(-21 838 648)"/>
<ellipse cx="846" cy="642" rx="25" ry="35" transform="rotate(-21 846 642)"/>
</g>
<ellipse cx="851.4" cy="639.5" rx="15" ry="23" transform="rotate(-21 851.4 639.5)" stroke-width="0.9"/>
<ellipse cx="853" cy="640" rx="22" ry="32" transform="rotate(-21 853 640)"/>
</g>
<path d="M817.7,520 L809.5,708" stroke="#000" stroke-width="1.2" opacity="0.55"/>
<path d="M509,888 L508.4,922.8" stroke="#1010e0" stroke-width="1.6"/>
<path d="M508.4,922.8 L535.7,936.4" stroke="#e01010" stroke-width="1.6"/>
<path d="M522,915 L535.7,909" stroke="#20d020" stroke-width="1.6"/>
<path d="M508.4,909.2 L521.3,917 L521.3,928.7 L508.4,922.8 Z" fill="#f4f4f4" stroke="#c0c0c0" stroke-width="0.6"/>
<text x="507.5" y="881" font-family="Liberation Sans, sans-serif" font-size="11" fill="#1030d0">Z</text>
<text x="539" y="905" font-family="Liberation Sans, sans-serif" font-size="11" fill="#30c030">Y</text>
<text x="540" y="937" font-family="Liberation Sans, sans-serif" font-size="11" fill="#e02020">X</text>
<text x="481.5" y="947.4" font-family="Liberation Sans, sans-serif" font-size="11" fill="#101010" textLength="127" lengthAdjust="spacing">[MACHINE_POSITION_1]</text>
<path d="M461.5,964 V969 H524.5 V963 M493,966 V969" fill="none" stroke="#000" stroke-width="1.2"/>
<text x="526" y="965.7" font-family="Liberation Sans, sans-serif" font-size="11" fill="#101010" textLength="38" lengthAdjust="spacing">20(mm)</text>
</svg>
</div>
<div class="abs grip-v" style="left:1px;top:30px;width:3px;height:22px;"></div>
<svg class="abs" style="left:10px;top:29px" width="22" height="22" viewBox="0 0 22 22"><path d="M1.5 3.5h14.5v18h-14.5z" fill="#eef4fc" stroke="#2a6ad0" stroke-width="1.4"/><path d="M3 5h8v15h-8z" fill="#fff" opacity="0.7"/><path d="M9 2 C13 6 15 10 18 14 M19.5 1.5 C15 6 12 10 9.5 15.5" fill="none" stroke="#e03030" stroke-width="2" stroke-linecap="round"/></svg>
<svg class="abs" style="left:36px;top:29px" width="22" height="22" viewBox="0 0 22 22"><path d="M1.5 5.5 L7 4.5 L9 7 L17 6.5 L16 20.5 L2.5 21.5 Z" fill="#e8c020" stroke="#a88400" stroke-width="0.8"/><path d="M2.5 21.5 L6 10.5 L23 9.5 L19.5 20 Z" fill="#f8dc40" stroke="#b89400" stroke-width="0.8"/><path d="M11 6 L18 2 L22 4.5 L22 8.5 L15 12 L11 9.5Z" fill="#9a9ea2" stroke="#505458" stroke-width="0.7"/><path d="M11 6 L18 2 L22 4.5 L15 8Z" fill="#d4d8dc"/></svg>
<svg class="abs" style="left:65px;top:29px" width="22" height="22" viewBox="0 0 22 22"><path d="M8 1h14v9h-14z" fill="#f4f8ff" stroke="#2a50c0" stroke-width="1"/><path d="M8 1h14v3h-14z" fill="#3060d8"/><rect x="19.5" y="1.3" width="2" height="2" fill="#e03030"/><path d="M1 13 L10 7.5 L18 10.5 L18 15.5 L9 21 L1 17.5Z" fill="#a8ccd8" stroke="#386878" stroke-width="0.9"/><path d="M1 13 L9 16.5 L18 10.5 M9 16.5 V21" fill="none" stroke="#386878" stroke-width="0.8"/><path d="M12 20.5 C15 23 19 22.5 20.5 19 L22.5 19.5 L20.5 15 L17 18 L19 18.5 C18 20.5 15 21 12 20.5Z" fill="#e0305c"/></svg>
<svg class="abs" style="left:93px;top:29px" width="22" height="22" viewBox="0 0 22 22"><path d="M1 2h17v19h-17z" fill="#1c48c8" stroke="#0c2880" stroke-width="0.8"/><path d="M3.5 2h12v9h-12z" fill="#e0e0e0"/><path d="M3.5 2h12v2.5h-12z" fill="#e84040"/><path d="M5 14h9.5v7h-9.5z" fill="#d8d8d8"/><rect x="6.5" y="15" width="2.5" height="5" fill="#1c48c8"/><path d="M18 21 L21 19.5" stroke="#888" stroke-width="1"/></svg>
<svg class="abs" style="left:121px;top:29px" width="22" height="22" viewBox="0 0 22 22"><circle cx="16" cy="7.5" r="5" fill="#c8d8ec" stroke="#7890b0" stroke-width="1.6" stroke-dasharray="2 1.2"/><circle cx="16" cy="7.5" r="2" fill="#f0f0f0"/><path d="M4 8 L7 3.5 L13 6 L11 10Z" fill="#fff" stroke="#6878a0" stroke-width="0.8"/><path d="M1 12 L5 8.5 L15 12 L15 17 L9 21 L1 17Z" fill="#c4ccdc" stroke="#5a6890" stroke-width="0.9"/><path d="M1 12 L9 15.5 L15 12 M9 15.5V21" fill="none" stroke="#5a6890" stroke-width="0.8"/><path d="M9.5 18.5 L17 14.5 L20 16 L12.5 20.5Z" fill="#fff" stroke="#6878a0" stroke-width="0.7"/></svg>
<svg class="abs" style="left:150px;top:29px" width="22" height="22" viewBox="0 0 22 22"><path d="M2 3 L12 2.5 L9.5 5.5 C15 6 18 10 16 15 C15 18 12 20.5 9 21.5 C12 18 13 14 11.5 11.5 C10.5 10 8.5 9.5 7 9.5 L5.5 12.5 Z" fill="#1c50b8" stroke="#0c2c78" stroke-width="0.7"/><path d="M4 4 L10 3.5 L8.5 6 C13 6.5 15.5 9.5 15 13" fill="none" stroke="#6aa0f0" stroke-width="1" opacity="0.8"/><rect x="17.5" y="18" width="1.6" height="3.2" fill="#f07020"/></svg>
<svg class="abs" style="left:178px;top:29px" width="22" height="22" viewBox="0 0 22 22"><path d="M20 4 L19.5 13.5 L16.5 11 C13 11 10.5 13 10.5 16 C10.5 18 11.5 20 13 21.5 C8 20 4.5 16.5 5 12 C5.5 8 9 5.5 13 6 L10.5 3 Z" fill="#1c50b8" stroke="#0c2c78" stroke-width="0.7"/><path d="M18.5 5 L12 4.5 M7 9 C9 7 11.5 6.8 13.5 7" fill="none" stroke="#6aa0f0" stroke-width="1" opacity="0.8"/></svg>
<svg class="abs" style="left:206px;top:29px" width="22" height="22" viewBox="0 0 22 22"><path d="M3 1V21M1 3H21" stroke="#1c3c98" stroke-width="1.05"/><path d="M8 1V21M1 8H21" stroke="#1c3c98" stroke-width="1.05"/><path d="M13 1V21M1 13H21" stroke="#1c3c98" stroke-width="1.05"/><path d="M18 1V21M1 18H21" stroke="#1c3c98" stroke-width="1.05"/><rect x="18" y="18" width="1.6" height="3.2" fill="#f07020"/></svg>
<div class="abs pressed" style="left:231px;top:28px;width:28px;height:26px;"></div>
<svg class="abs" style="left:235px;top:29px" width="22" height="22" viewBox="0 0 22 22"><rect x="1" y="2" width="20" height="18" rx="1.5" fill="#202020"/><rect x="7.5" y="4" width="12" height="14.5" fill="#8098e0"/><rect x="7.5" y="4" width="5" height="14.5" fill="#98ace8"/><rect x="2.5" y="4" width="4" height="14.5" fill="#f8f8f8"/><path d="M2.5 5.5h4M2.5 7.5h4M2.5 9.5h4M2.5 11.5h4M2.5 13.5h4M2.5 15.5h4" stroke="#404040" stroke-width="0.8"/><path d="M2.5 5.5h1.2M2.5 15.5h1.2" stroke="#e02020" stroke-width="1"/><path d="M2.5 3.3h1.5" stroke="#20c020" stroke-width="1"/><path d="M2.5 17.5h1.5" stroke="#2040e0" stroke-width="1"/></svg>
<div class="abs grip-v" style="left:262px;top:30px;width:3px;height:22px;"></div>
<svg class="abs" style="left:272px;top:29px" width="24" height="22" viewBox="0 0 24 22"><path d="M1 8 L7 2 L7 12 L1 18Z" fill="#c8ccdc" stroke="#8088a0" stroke-width="0.7"/><path d="M10 13 V3" stroke="#1020d0" stroke-width="2.2"/><path d="M10 0 L6.8 5 L13.2 5Z" fill="#1020d0"/><path d="M10 13 L3 17.5" stroke="#a02020" stroke-width="2.2"/><path d="M0.5 19 L6 18.5 L3.5 14.5Z" fill="#e01818"/><path d="M10 13 L17 16.5" stroke="#20a030" stroke-width="2.2"/><path d="M20.5 18 L15 18.5 L17 14Z" fill="#18c028"/><text x="13.5" y="11" font-family="Liberation Sans,sans-serif" font-weight="bold" font-size="9.5" letter-spacing="-0.8" ><tspan fill="#e02020">X</tspan><tspan fill="#2030d0">Z</tspan></text></svg>
<svg class="abs" style="left:302px;top:29px" width="24" height="22" viewBox="0 0 24 22"><path d="M10 13 V3" stroke="#1020d0" stroke-width="2.2"/><path d="M10 0 L6.8 5 L13.2 5Z" fill="#1020d0"/><path d="M10 13 L3 17.5" stroke="#a02020" stroke-width="2.2"/><path d="M0.5 19 L6 18.5 L3.5 14.5Z" fill="#e01818"/><path d="M10 13 L17 16.5" stroke="#20a030" stroke-width="2.2"/><path d="M20.5 18 L15 18.5 L17 14Z" fill="#18c028"/><text x="13.5" y="11" font-family="Liberation Sans,sans-serif" font-weight="bold" font-size="9.5" fill="#101010">M</text><rect x="19" y="18" width="1.6" height="3.2" fill="#f07020"/></svg>
<div class="abs grip-v" style="left:330px;top:30px;width:3px;height:22px;"></div>
<svg class="abs" style="left:341px;top:29px" width="22" height="22" viewBox="0 0 22 22"><path d="M10 1 L19 5.5 L19 15.5 L10 20.5 L1 15.5 L1 5.5 Z" fill="#cfe4fa" opacity="0.9"/><path d="M10 1 L19 5.5 L19 15.5 L10 20.5 L1 15.5 L1 5.5 Z M1 5.5 L10 10 L19 5.5 M10 10 L10 20.5" fill="none" stroke="#2a40e8" stroke-width="1.1" stroke-linejoin="round"/><path d="M10 1 L10 10.5 M1 15.5 L10 10.5 L19 15.5" fill="none" stroke="#2a40e8" stroke-width="0.7" opacity="0.7"/><rect x="17.5" y="17.5" width="1.6" height="3.2" fill="#f07020"/></svg>
<svg class="abs" style="left:369.5px;top:29px" width="22" height="22" viewBox="0 0 22 22"><path d="M10 1 L19 5.5 L19 15.5 L10 20.5 L1 15.5 L1 5.5 Z" fill="#cfe4fa" opacity="0.9"/><path d="M10 1 L19 5.5 L19 15.5 L10 20.5 L1 15.5 L1 5.5 Z M1 5.5 L10 10 L19 5.5 M10 10 L10 20.5" fill="none" stroke="#2a40e8" stroke-width="1.1" stroke-linejoin="round"/><rect x="17.5" y="17.5" width="1.6" height="3.2" fill="#f07020"/></svg>
<svg class="abs" style="left:397px;top:29px" width="22" height="22" viewBox="0 0 22 22"><path d="M10.0 0.0 L20.0 4.8 L10.0 9.6 L0.0 4.8 Z" fill="#4a9cf0" opacity="1"/><path d="M0.0 4.8 L10.0 9.6 L10.0 20.0 L0.0 15.2 Z" fill="#2f7fd8" opacity="1"/><path d="M20.0 4.8 L10.0 9.6 L10.0 20.0 L20.0 15.2 Z" fill="#2468c0" opacity="1"/><rect x="17.5" y="17.5" width="1.6" height="3.2" fill="#f07020"/></svg>
<div class="abs pressed" style="left:422px;top:28px;width:27px;height:26px;"></div>
<svg class="abs" style="left:426px;top:29px" width="22" height="22" viewBox="0 0 22 22"><path d="M10.0 0.0 L20.0 4.8 L10.0 9.6 L0.0 4.8 Z" fill="#4a9cf0" opacity="1"/><path d="M0.0 4.8 L10.0 9.6 L10.0 20.0 L0.0 15.2 Z" fill="#2f7fd8" opacity="1"/><path d="M20.0 4.8 L10.0 9.6 L10.0 20.0 L20.0 15.2 Z" fill="#2468c0" opacity="1"/><rect x="17.5" y="17.5" width="1.6" height="3.2" fill="#f07020"/></svg>
<svg class="abs" style="left:452.5px;top:29px" width="22" height="22" viewBox="0 0 22 22"><defs><radialGradient id="g13" cx="0.45" cy="0.4" r="0.6"><stop offset="0" stop-color="#a8d4ff"/><stop offset="0.45" stop-color="#3a90e8"/><stop offset="1" stop-color="#0c48a0"/></radialGradient></defs><ellipse cx="11" cy="20" rx="8" ry="1.8" fill="#000" opacity="0.35"/><circle cx="11" cy="10.5" r="10" fill="url(#g13)"/><path d="M7 7 L13 5.5 L15 10 L10 13 L6 11Z" fill="#d8ecff" opacity="0.55"/></svg>
<svg class="abs" style="left:482px;top:29px" width="19" height="22" viewBox="0 0 19 22"><defs><linearGradient id="rbl" x1="0" y1="0" x2="0.3" y2="1"><stop offset="0" stop-color="#3048f0"/><stop offset="0.45" stop-color="#20e0e8"/><stop offset="1" stop-color="#48e838"/></linearGradient><linearGradient id="rbr" x1="1" y1="0" x2="0.6" y2="1"><stop offset="0" stop-color="#d020a0"/><stop offset="0.45" stop-color="#f03838"/><stop offset="1" stop-color="#e8e020"/></linearGradient><linearGradient id="rbt" x1="0" y1="0" x2="1" y2="0"><stop offset="0" stop-color="#4860c0"/><stop offset="0.5" stop-color="#585860"/><stop offset="1" stop-color="#c03070"/></linearGradient></defs><path d="M9 1 L18 5 L9 10 L0.5 5Z" fill="url(#rbt)"/><path d="M0.5 5 L9 10 L9 20.5 L0.5 15.5Z" fill="url(#rbl)"/><path d="M18 5 L9 10 L9 20.5 L18 15.5Z" fill="url(#rbr)"/><path d="M9 10 L9 20.5" stroke="#b0f060" stroke-width="1.2"/></svg>
<svg class="abs" style="left:508px;top:29px" width="22" height="22" viewBox="0 0 22 22"><rect x="1" y="5" width="20" height="12" rx="1.5" fill="#c8c8c8" stroke="#707070" stroke-width="0.8"/><rect x="1.5" y="5.5" width="5" height="11" fill="#8a8a8a"/><rect x="8" y="3.5" width="6" height="2.5" fill="#a0a0a0"/><circle cx="14" cy="11.5" r="3.8" fill="#e8e8e8" stroke="#606060" stroke-width="0.8"/><circle cx="14" cy="11.5" r="1.8" fill="#202020"/><rect x="17.5" y="6.5" width="2.5" height="1.5" fill="#f4f4f4"/></svg>
<div class="abs grip-v" style="left:538px;top:30px;width:3px;height:22px;"></div>
<svg class="abs" style="left:547px;top:29px" width="24" height="24" viewBox="0 0 24 24"><g transform="translate(4.5 0) scale(0.93)"><path d="M10 1 L19 5.5 L19 15.5 L10 20.5 L1 15.5 L1 5.5 Z" fill="#a8ccf8" opacity="0.95"/><path d="M10 1 L19 5.5 L19 15.5 L10 20.5 L1 15.5 L1 5.5 Z M1 5.5 L10 10 L19 5.5 M10 10 L10 20.5" fill="none" stroke="#3a58f0" stroke-width="1.1" stroke-linejoin="round"/><path d="M10 1 L10 10.5 M1 15.5 L10 10.5 L19 15.5" fill="none" stroke="#3a58f0" stroke-width="0.7" opacity="0.7"/><path d="M10 10 L19 5.5 L19 15.5 L10 20.5Z" fill="#2a60e0" opacity="0.6"/><path d="M10 1 L19 5.5 L10 10 L1 5.5Z" fill="#5a8cf0" opacity="0.5"/></g><text x="0" y="22.5" font-family="Liberation Sans,sans-serif" font-weight="bold" font-size="13" fill="#e01828" stroke="#e01828" stroke-width="0.7">X</text><path d="M9.5 17h8M13.5 13v8" stroke="#e01828" stroke-width="3"/><rect x="19.5" y="18.5" width="1.6" height="3.2" fill="#f07020"/></svg>
<svg class="abs" style="left:574.5px;top:29px" width="24" height="24" viewBox="0 0 24 24"><g transform="translate(4.5 0) scale(0.93)"><path d="M10 1 L19 5.5 L19 15.5 L10 20.5 L1 15.5 L1 5.5 Z" fill="#a8ccf8" opacity="0.95"/><path d="M10 1 L19 5.5 L19 15.5 L10 20.5 L1 15.5 L1 5.5 Z M1 5.5 L10 10 L19 5.5 M10 10 L10 20.5" fill="none" stroke="#3a58f0" stroke-width="1.1" stroke-linejoin="round"/><path d="M10 1 L10 10.5 M1 15.5 L10 10.5 L19 15.5" fill="none" stroke="#3a58f0" stroke-width="0.7" opacity="0.7"/><path d="M10 10 L19 5.5 L19 15.5 L10 20.5Z" fill="#2a60e0" opacity="0.6"/><path d="M10 1 L19 5.5 L10 10 L1 5.5Z" fill="#5a8cf0" opacity="0.5"/></g><text x="0" y="22.5" font-family="Liberation Sans,sans-serif" font-weight="bold" font-size="13" fill="#18b028" stroke="#18b028" stroke-width="0.7">Y</text><path d="M9.5 17h8M13.5 13v8" stroke="#18b028" stroke-width="3"/><rect x="19.5" y="18.5" width="1.6" height="3.2" fill="#f07020"/></svg>
<svg class="abs" style="left:602.5px;top:29px" width="24" height="24" viewBox="0 0 24 24"><g transform="translate(4.5 0) scale(0.93)"><path d="M10 1 L19 5.5 L19 15.5 L10 20.5 L1 15.5 L1 5.5 Z" fill="#a8ccf8" opacity="0.95"/><path d="M10 1 L19 5.5 L19 15.5 L10 20.5 L1 15.5 L1 5.5 Z M1 5.5 L10 10 L19 5.5 M10 10 L10 20.5" fill="none" stroke="#3a58f0" stroke-width="1.1" stroke-linejoin="round"/><path d="M10 1 L10 10.5 M1 15.5 L10 10.5 L19 15.5" fill="none" stroke="#3a58f0" stroke-width="0.7" opacity="0.7"/><path d="M10 10 L19 5.5 L19 15.5 L10 20.5Z" fill="#2a60e0" opacity="0.6"/><path d="M10 1 L19 5.5 L10 10 L1 5.5Z" fill="#5a8cf0" opacity="0.5"/></g><text x="0" y="22.5" font-family="Liberation Sans,sans-serif" font-weight="bold" font-size="13" fill="#2838a8" stroke="#2838a8" stroke-width="0.7">Z</text><path d="M9.5 17h8M13.5 13v8" stroke="#2838a8" stroke-width="3"/><rect x="19.5" y="18.5" width="1.6" height="3.2" fill="#f07020"/></svg>
<svg class="abs" style="left:631.5px;top:29px" width="22" height="22" viewBox="0 0 22 22"><path d="M10 1 L19 5.5 L19 15.5 L10 20.5 L1 15.5 L1 5.5 Z" fill="#c8dcf8" opacity="0.9"/><path d="M10 1 L19 5.5 L19 15.5 L10 20.5 L1 15.5 L1 5.5 Z M1 5.5 L10 10 L19 5.5 M10 10 L10 20.5" fill="none" stroke="#4a68f0" stroke-width="1.1" stroke-linejoin="round"/><path d="M10 1 L10 10.5 M1 15.5 L10 10.5 L19 15.5" fill="none" stroke="#4a68f0" stroke-width="0.7" opacity="0.7"/><path d="M3 17 V7" stroke="#1020b0" stroke-width="2"/><path d="M3 4.5 L0.5 8.5 L5.5 8.5Z" fill="#1020b0"/><path d="M3 17 L9 20" stroke="#e01818" stroke-width="2.2"/><path d="M12 21.5 L7 21 L9 17.5Z" fill="#e01818"/><path d="M5 15 L11 10.5" stroke="#30c040" stroke-width="2"/><path d="M13 9 L8.5 10 L11 13Z" fill="#30c040"/><rect x="18" y="18" width="1.6" height="3.2" fill="#f07020"/></svg>
<svg class="abs" style="left:658px;top:29px" width="24" height="24" viewBox="0 0 24 24"><g transform="translate(4.5 0) scale(0.93)"><path d="M10 1 L19 5.5 L19 15.5 L10 20.5 L1 15.5 L1 5.5 Z" fill="#a8ccf8" opacity="0.95"/><path d="M10 1 L19 5.5 L19 15.5 L10 20.5 L1 15.5 L1 5.5 Z M1 5.5 L10 10 L19 5.5 M10 10 L10 20.5" fill="none" stroke="#3a58f0" stroke-width="1.1" stroke-linejoin="round"/><path d="M10 1 L10 10.5 M1 15.5 L10 10.5 L19 15.5" fill="none" stroke="#3a58f0" stroke-width="0.7" opacity="0.7"/><path d="M10 10 L19 5.5 L19 15.5 L10 20.5Z" fill="#2a60e0" opacity="0.6"/><path d="M10 1 L19 5.5 L10 10 L1 5.5Z" fill="#5a8cf0" opacity="0.5"/></g><text x="0" y="22.5" font-family="Liberation Sans,sans-serif" font-weight="bold" font-size="13" fill="#e01828" stroke="#e01828" stroke-width="0.7">X</text><path d="M10 17.5h7.5" stroke="#e01828" stroke-width="3.2"/><rect x="19.5" y="18.5" width="1.6" height="3.2" fill="#f07020"/></svg>
<svg class="abs" style="left:686px;top:29px" width="24" height="24" viewBox="0 0 24 24"><g transform="translate(4.5 0) scale(0.93)"><path d="M10 1 L19 5.5 L19 15.5 L10 20.5 L1 15.5 L1 5.5 Z" fill="#a8ccf8" opacity="0.95"/><path d="M10 1 L19 5.5 L19 15.5 L10 20.5 L1 15.5 L1 5.5 Z M1 5.5 L10 10 L19 5.5 M10 10 L10 20.5" fill="none" stroke="#3a58f0" stroke-width="1.1" stroke-linejoin="round"/><path d="M10 1 L10 10.5 M1 15.5 L10 10.5 L19 15.5" fill="none" stroke="#3a58f0" stroke-width="0.7" opacity="0.7"/><path d="M10 10 L19 5.5 L19 15.5 L10 20.5Z" fill="#2a60e0" opacity="0.6"/><path d="M10 1 L19 5.5 L10 10 L1 5.5Z" fill="#5a8cf0" opacity="0.5"/></g><text x="0" y="22.5" font-family="Liberation Sans,sans-serif" font-weight="bold" font-size="13" fill="#18b028" stroke="#18b028" stroke-width="0.7">Y</text><path d="M10 17.5h7.5" stroke="#18b028" stroke-width="3.2"/><rect x="19.5" y="18.5" width="1.6" height="3.2" fill="#f07020"/></svg>
<svg class="abs" style="left:714px;top:29px" width="24" height="24" viewBox="0 0 24 24"><g transform="translate(4.5 0) scale(0.93)"><path d="M10 1 L19 5.5 L19 15.5 L10 20.5 L1 15.5 L1 5.5 Z" fill="#a8ccf8" opacity="0.95"/><path d="M10 1 L19 5.5 L19 15.5 L10 20.5 L1 15.5 L1 5.5 Z M1 5.5 L10 10 L19 5.5 M10 10 L10 20.5" fill="none" stroke="#3a58f0" stroke-width="1.1" stroke-linejoin="round"/><path d="M10 1 L10 10.5 M1 15.5 L10 10.5 L19 15.5" fill="none" stroke="#3a58f0" stroke-width="0.7" opacity="0.7"/><path d="M10 10 L19 5.5 L19 15.5 L10 20.5Z" fill="#2a60e0" opacity="0.6"/><path d="M10 1 L19 5.5 L10 10 L1 5.5Z" fill="#5a8cf0" opacity="0.5"/></g><text x="0" y="22.5" font-family="Liberation Sans,sans-serif" font-weight="bold" font-size="13" fill="#2838a8" stroke="#2838a8" stroke-width="0.7">Z</text><path d="M10 17.5h7.5" stroke="#2838a8" stroke-width="3.2"/><rect x="19.5" y="18.5" width="1.6" height="3.2" fill="#f07020"/></svg>
<svg class="abs" style="left:744px;top:29px" width="22" height="22" viewBox="0 0 22 22"><rect x="1" y="3" width="16" height="17" fill="#fff" stroke="#202020" stroke-width="1.2"/><rect x="1" y="1" width="7" height="2.5" fill="#202020"/><rect x="1" y="3" width="16" height="3.2" fill="#505050"/><path d="M6 4.6h7" stroke="#e0e0e0" stroke-width="1"/><path d="M2.5 8.5h1.5M2.5 11h1.5M2.5 13.5h1.5M2.5 16h1.5M2.5 18.3h1.5" stroke="#202020" stroke-width="1.2"/><path d="M5 6v14" stroke="#202020" stroke-width="0.8"/><text x="6.5" y="18.8" font-family="Liberation Sans,sans-serif" font-weight="bold" font-size="12.5" fill="#18a838" stroke="#18a838" stroke-width="0.6">S</text></svg>
<svg class="abs" style="left:771.5px;top:29px" width="22" height="22" viewBox="0 0 22 22"><rect x="1" y="3" width="16" height="17" fill="#fff" stroke="#202020" stroke-width="1.2"/><rect x="1" y="1" width="7" height="2.5" fill="#202020"/><rect x="1" y="3" width="16" height="3.2" fill="#505050"/><path d="M6 4.6h7" stroke="#e0e0e0" stroke-width="1"/><path d="M2.5 8.5h1.5M2.5 11h1.5M2.5 13.5h1.5M2.5 16h1.5M2.5 18.3h1.5" stroke="#202020" stroke-width="1.2"/><path d="M5 6v14" stroke="#202020" stroke-width="0.8"/><text x="6.5" y="18.8" font-family="Liberation Sans,sans-serif" font-weight="bold" font-size="12.5" fill="#e01818" stroke="#e01818" stroke-width="0.6">L</text></svg>
<svg class="abs" style="left:797px;top:29px" width="24" height="22" viewBox="0 0 24 22"><defs><radialGradient id="g14" cx="0.4" cy="0.35" r="0.7"><stop offset="0" stop-color="#f0f8ff"/><stop offset="1" stop-color="#88b8e0"/></radialGradient></defs><path d="M8.1 15.05 L2.0 22.0" stroke="#c84818" stroke-width="2.6" stroke-linecap="round"/><circle cx="12" cy="10.5" r="6.5" fill="url(#g14)" stroke="#303030" stroke-width="1.6"/><path d="M1 1 l3.5 0.5 l-3 3z M22 1 l-3.5 0.5 l3 3z M22 21 l-3.5 -0.5 l3 -3z" fill="#3a70e0"/><path d="M2.5 2.5 l2.5 2.5 M20.5 2.5 l-2.5 2.5 M20.5 19.5 l-2.5 -2.5" stroke="#3a70e0" stroke-width="1.2"/></svg>
<svg class="abs" style="left:825px;top:29px" width="24" height="22" viewBox="0 0 24 22"><rect x="10" y="11" width="12" height="10" fill="#c8dcf4" stroke="#3a68d0" stroke-width="1.2"/><defs><radialGradient id="g15" cx="0.4" cy="0.35" r="0.7"><stop offset="0" stop-color="#f0f8ff"/><stop offset="1" stop-color="#88b8e0"/></radialGradient></defs><path d="M7.1 13.05 L1.0 20.0" stroke="#c84818" stroke-width="2.6" stroke-linecap="round"/><circle cx="11" cy="8.5" r="6.5" fill="url(#g15)" stroke="#303030" stroke-width="1.6"/></svg>
<svg class="abs" style="left:852.5px;top:29px" width="22" height="22" viewBox="0 0 22 22"><ellipse cx="11" cy="11" rx="9.5" ry="4.5" fill="none" stroke="#3a58f0" stroke-width="2.2" opacity="0.85"/><ellipse cx="11" cy="11" rx="4.5" ry="9.5" fill="none" stroke="#5a78f8" stroke-width="2.2" opacity="0.8"/><path d="M5 9 L11 6 L17 9 L17 14 L11 17 L5 14Z" fill="#dce8fc" stroke="#2a48d8" stroke-width="0.9"/></svg>
<svg class="abs" style="left:880px;top:29px" width="22" height="22" viewBox="0 0 22 22"><ellipse cx="11" cy="11" rx="9.5" ry="4.5" fill="none" stroke="#3a58f0" stroke-width="2.2" opacity="0.85"/><ellipse cx="11" cy="11" rx="4.5" ry="9.5" fill="none" stroke="#5a78f8" stroke-width="2.2" opacity="0.8"/><path d="M5 9 L11 6 L17 9 L17 14 L11 17 L5 14Z" fill="#dce8fc" stroke="#2a48d8" stroke-width="0.9"/><rect x="9.5" y="8.5" width="2.5" height="3" fill="#f07020"/></svg>
<svg class="abs" style="left:908px;top:29px" width="24" height="22" viewBox="0 0 24 22"><circle cx="11" cy="10.5" r="7" fill="none" stroke="#606878" stroke-width="1.3"/><path d="M11 0.5V21.5M1 10.5H22" stroke="#6a90f0" stroke-width="1.1"/><text x="0" y="21" font-family="Liberation Sans,sans-serif" font-weight="bold" font-size="8" fill="#3848a0">D</text><path d="M5.5 15.5 C7 16.5 7 19 5.5 21" fill="none" stroke="#808080" stroke-width="0.7"/><rect x="19.5" y="17.5" width="1.6" height="3.2" fill="#f07020"/></svg>
<div class="abs" style="left:935px;top:29px;width:23px;height:23px;border:1px solid #3a78b0;border-radius:3px;background:linear-gradient(#5a9cd0,#a8d0ec)"></div>
<svg class="abs" style="left:936px;top:29px" width="22" height="22" viewBox="0 0 22 22"><path d="M11 2V19M3 17 L19 5" stroke="#c8d8f0" stroke-width="0.9"/><path d="M5 8 C10 6 15 10 14.5 18" fill="none" stroke="#606870" stroke-width="1.3"/><path d="M3.5 9.5 L7.5 6.2 L7 10.5Z" fill="#606870"/><path d="M14 10 L5 15.5" stroke="#b01818" stroke-width="2.6"/><path d="M1.5 17.5 L8 17.2 L5 12.5Z" fill="#e01818"/><text x="14.5" y="8" font-family="Liberation Sans,sans-serif" font-weight="bold" font-size="8" fill="#404850">X</text></svg>
<div class="abs" style="left:960px;top:29px;width:23px;height:23px;border:1px solid #808080;border-radius:3px;background:linear-gradient(#c8c8c8,#e8e8e8)"></div>
<svg class="abs" style="left:961px;top:29px" width="22" height="22" viewBox="0 0 22 22"><path d="M9 3V19M3 6 L19 17" stroke="#8890c0" stroke-width="0.9"/><path d="M14.5 5 C9 6 6.5 12 8 18" fill="none" stroke="#606870" stroke-width="1.3"/><path d="M16.5 3.5 L12 3.8 L14.5 7.5Z" fill="#606870"/><path d="M9 10.5 L17 15" stroke="#18a028" stroke-width="2.6"/><path d="M20.5 17 L14.5 17 L17 12.3Z" fill="#18c028"/><text x="2.5" y="8" font-family="Liberation Sans,sans-serif" font-weight="bold" font-size="8" fill="#404850">Y</text></svg>
<div class="abs" style="left:985px;top:29px;width:23px;height:23px;border:1px solid #808080;border-radius:3px;background:linear-gradient(#c8c8c8,#e8e8e8)"></div>
<svg class="abs" style="left:986px;top:29px" width="22" height="22" viewBox="0 0 22 22"><path d="M11 11 L3 19M11 11L19 19" stroke="#8890c0" stroke-width="0.9"/><path d="M4 7 C7 13 15 13 18 7" fill="none" stroke="#606870" stroke-width="1.3"/><path d="M2.5 4.5 L3 9.5 L7 7Z" fill="#606870"/><path d="M11 16 V6" stroke="#1828b8" stroke-width="2.6"/><path d="M11 1.5 L7.5 7 L14.5 7Z" fill="#1828d0"/><text x="14.5" y="20" font-family="Liberation Sans,sans-serif" font-weight="bold" font-size="8" fill="#404850">Z</text></svg>
<div class="abs" style="left:1009px;top:29px;width:25px;height:24px;background:#fff;border:1px solid #abadb3;border-top-color:#70747c"><span class="t" style="left:3px;top:5px;font-size:12px">1</span></div>
<div class="abs" style="left:1033px;top:29px;width:14px;height:24px;border:1px solid #707070;border-radius:2px;background:linear-gradient(#f2f2f2,#d4d4d4)"><svg width="12" height="22"><path d="M2.5 9 L9.5 9 L6 13 Z" fill="#000"/></svg></div>
<div class="abs" style="left:1050px;top:29px;width:20px;height:24px;border:1px solid #a0a0a0;border-radius:3px;background:linear-gradient(#f6f6f6,#dadada)"><span class="t" style="left:7px;top:4px;font-size:10px;color:#303030">-</span></div>
<div class="abs" style="left:1073px;top:29px;width:20px;height:24px;border:1px solid #a0a0a0;border-radius:3px;background:linear-gradient(#f6f6f6,#dadada)"><span class="t" style="left:7px;top:4px;font-size:10px;color:#303030">+</span></div>
<div class="abs" style="left:34px;top:55px;width:1px;height:943px;background:#a0a0a0"></div>
<div class="abs grip-h" style="left:2px;top:58px;width:30px;height:5px;"></div>
<div class="ltbtn" style="top:67.5px"></div>
<svg class="abs" style="left:1px;top:67px;overflow:visible" width="32" height="32" viewBox="0 0 32 32"><g transform="translate(1.5 1.5)"><path d="M3 13 C6 9 9 6 13 3.5 C16 5 19 7 22 10 C19 14 16 18 13 22 C9 19 6 16 3 13Z" fill="#1c78e0" stroke="#0c4aa8" stroke-width="0.8"/><path d="M5 13 C8 9.5 10 7.5 13 5.5 L16.5 8 C13 10 11 12.5 8.5 16Z" fill="#58b0ff" opacity="0.8"/><path d="M13 22 C16 18 19 14 22 10 L24 14 C21 17 18 20 15.5 23Z" fill="#0c50b0"/><path d="M10 16.5 L22.5 5 L25 7.5 L12.5 18.5 L9 19.5Z" fill="#f0a020" stroke="#a86000" stroke-width="0.6"/><path d="M22.5 5 L24 3.5 L26.5 6 L25 7.5Z" fill="#f05060"/><path d="M10 16.5 L12.5 18.5 L9 19.5Z" fill="#f8e8c0"/></g></svg>
<svg class="abs" style="left:1px;top:101px;overflow:visible" width="32" height="32" viewBox="0 0 32 32"><g transform="translate(2 3)"><path d="M1 9 C2 4 6 2.5 9 3 L8.5 0.5 L14 5 L9.5 9 L9.3 6.3 C7 6 5.5 7 5 9.5 C4 8 2.5 8 1 9Z" fill="#e88020" stroke="#b05808" stroke-width="0.6"/></g><path d="M17 8 L25 3.5 L30 6 L30 12 L22 17 L17 14Z" fill="#9a9ea2" stroke="#404448" stroke-width="0.8"/><path d="M17 8 L25 3.5 L30 6 L22 10.5Z" fill="#50d870"/><path d="M17 11 L22 13.5 L22 17 L17 14Z" fill="#e0e0e0"/><path d="M2 18 L11 12.5 L16 18.5 C13 21 10 24.5 7.5 28.5 C5.5 24.5 3.5 21 2 18Z" fill="#1c68e0" stroke="#0c40a8" stroke-width="0.7"/><path d="M6.5 15.2 L11.5 23 M4.5 22.5 L13.5 15.5" stroke="#7ab8ff" stroke-width="0.9"/><path d="M30 30 L30 25 L25 30 Z" fill="#505050"/></svg>
<svg class="abs" style="left:1px;top:137px;overflow:visible" width="32" height="32" viewBox="0 0 32 32"><g transform="translate(2 2)"><path d="M1 9 C2 4 6 2.5 9 3 L8.5 0.5 L14 5 L9.5 9 L9.3 6.3 C7 6 5.5 7 5 9.5 C4 8 2.5 8 1 9Z" fill="#e88020" stroke="#b05808" stroke-width="0.6"/></g><path d="M19.5 2 V13" stroke="#f03030" stroke-width="1.2" stroke-dasharray="1.5 1.2"/><circle cx="19.5" cy="13.5" r="1.6" fill="#f03030"/><path d="M21 15 L28 9 L29.5 11.5 L23 16.5 L25 18.5 L30 14.5" fill="none" stroke="#b8a800" stroke-width="3.2"/><path d="M21 15 L28 9 L29.5 11.5 L23 16.5 L25 18.5 L30 14.5" fill="none" stroke="#f0e020" stroke-width="1.8"/><path d="M2.5 16.5 L6.5 29.5" stroke="#1c60f0" stroke-width="2.4"/><path d="M9 25 C8 21 11 19 14 19.5 C18 20 21 22 20 25 C19 28 15 30 12 29 C10 28.5 9.3 27 9 25Z" fill="none" stroke="#1c60f0" stroke-width="2.4"/><rect x="1.2" y="15.2" width="2.6" height="2.6" fill="#f07020"/><rect x="5.2" y="28.2" width="2.6" height="2.6" fill="#f07020"/><rect x="7.7" y="23.7" width="2.6" height="2.6" fill="#f07020"/><rect x="12.7" y="18.2" width="2.6" height="2.6" fill="#f07020"/><rect x="19.2" y="22.7" width="2.6" height="2.6" fill="#f07020"/><rect x="11.7" y="28.0" width="2.6" height="2.6" fill="#f07020"/></svg>
<div class="abs grip-h" style="left:2px;top:173px;width:30px;height:5px;"></div>
<svg class="abs" style="left:1px;top:185px;overflow:visible" width="32" height="32" viewBox="0 0 32 32"><g transform="translate(2 3)"><g transform="translate(-1 -3) scale(1.1)"><svg width="26" height="27" viewBox="0 0 26 27" overflow="visible"><defs><linearGradient id="g16" x1="0" y1="0" x2="1" y2="1"><stop offset="0" stop-color="#ffffff"/><stop offset="1" stop-color="#a8acb2"/></linearGradient><linearGradient id="g17" x1="0" y1="0" x2="1" y2="0.6"><stop offset="0" stop-color="#c4c8cc"/><stop offset="1" stop-color="#888c92"/></linearGradient></defs><path d="M1.3 14.1 C4 11 10 5.5 15.5 2.1 L23.7 7.4 L23.7 17.1 L9.4 25.2 L1.3 20.8 Z" fill="#c8ccd0"/><path d="M15.5 2.1 L23.7 7.4 L14.7 13 L9.4 8.3 C11 6 13 4 15.5 2.1Z" fill="url(#g17)"/><path d="M14.7 13 L23.7 7.4 L23.7 17.1 L9.4 25.2 L9.4 19.5 Z" fill="url(#g16)"/><path d="M1.3 14.1 C3 12 6 10 9.4 8.3 L14.7 13 L9.4 19.5 Z" fill="#58d8e8"/><path d="M1.3 14.1 L9.4 19.5 L9.4 25.2 L1.3 20.8 Z" fill="#58d8e8"/><path d="M1.3 18.5 L9.4 23.2 L9.4 25.2 L1.3 20.8Z" fill="#c8ccd0"/><path d="M6 14 L10.5 11" stroke="#fff" stroke-width="1.6" opacity="0.6"/><path d="M1.3 14.1 L9.4 19.5 L14.7 13" fill="none" stroke="#688" stroke-width="0.5"/><path d="M1.3 14.1 C4 11 10 5.5 15.5 2.1 L23.7 7.4 L23.7 17.1 L9.4 25.2 L1.3 20.8 Z" fill="none" stroke="#3c3c3c" stroke-width="1.15" stroke-linejoin="round"/><path d="M9.4 19.5 L14.7 13 L23.7 7.4 M9.4 19.5 V25.2" fill="none" stroke="#3c3c3c" stroke-width="0.7" opacity="0.75"/></svg></g></g><polygon points="26.0,-1.0 27.2,2.3 30.8,2.5 28.0,4.6 28.9,8.0 26.0,6.1 23.1,8.0 24.0,4.6 21.2,2.5 24.8,2.3" fill="#ff5a10" stroke="#ffb030" stroke-width="0.6"/><path d="M30.5 28 L30.5 23 L25.5 28 Z" fill="#585858"/></svg>
<svg class="abs" style="left:1px;top:219px;overflow:visible" width="32" height="32" viewBox="0 0 32 32"><g transform="translate(2 3)"><g transform="translate(-1 -3) scale(1.1)"><svg width="26" height="27" viewBox="0 0 26 27" overflow="visible"><defs><linearGradient id="g18" x1="0" y1="0" x2="1" y2="1"><stop offset="0" stop-color="#ffffff"/><stop offset="1" stop-color="#a8acb2"/></linearGradient><linearGradient id="g19" x1="0" y1="0" x2="1" y2="0.6"><stop offset="0" stop-color="#c4c8cc"/><stop offset="1" stop-color="#888c92"/></linearGradient></defs><path d="M1.3 14.1 C4 11 10 5.5 15.5 2.1 L23.7 7.4 L23.7 17.1 L9.4 25.2 L1.3 20.8 Z" fill="#c8ccd0"/><path d="M15.5 2.1 L23.7 7.4 L14.7 13 L9.4 8.3 C11 6 13 4 15.5 2.1Z" fill="url(#g19)"/><path d="M14.7 13 L23.7 7.4 L23.7 17.1 L9.4 25.2 L9.4 19.5 Z" fill="url(#g18)"/><path d="M1.3 14.1 C3 12 6 10 9.4 8.3 L14.7 13 L9.4 19.5 Z" fill="#e8eaec"/><path d="M1.3 14.1 L9.4 19.5 L9.4 25.2 L1.3 20.8 Z" fill="#b4b8bc"/><path d="M1.3 14.1 C4 11 10 5.5 15.5 2.1 L23.7 7.4 L23.7 17.1 L9.4 25.2 L1.3 20.8 Z" fill="none" stroke="#3c3c3c" stroke-width="1.15" stroke-linejoin="round"/><path d="M9.4 19.5 L14.7 13 L23.7 7.4 M9.4 19.5 V25.2" fill="none" stroke="#3c3c3c" stroke-width="0.7" opacity="0.75"/><path d="M0 9.5 L13.5 0.5 L24 5 L10.500 14Z" fill="#3a90e0" stroke="#1c4a90" stroke-width="0.9"/><path d="M2.500 9.5 L13.5 2 L17 3.6 L6 11.3Z" fill="#9cd0ff" opacity="0.75"/></svg></g></g><polygon points="26.0,-1.0 27.2,2.3 30.8,2.5 28.0,4.6 28.9,8.0 26.0,6.1 23.1,8.0 24.0,4.6 21.2,2.5 24.8,2.3" fill="#ff5a10" stroke="#ffb030" stroke-width="0.6"/><path d="M30.5 28 L30.5 23 L25.5 28 Z" fill="#585858"/></svg>
<svg class="abs" style="left:1px;top:253px;overflow:visible" width="32" height="32" viewBox="0 0 32 32"><g transform="translate(2 3)"><g transform="translate(-1 -3) scale(1.1)"><svg width="26" height="27" viewBox="0 0 26 27" overflow="visible"><defs><linearGradient id="g20" x1="0" y1="0" x2="1" y2="1"><stop offset="0" stop-color="#ffffff"/><stop offset="1" stop-color="#a8acb2"/></linearGradient><linearGradient id="g21" x1="0" y1="0" x2="1" y2="0.6"><stop offset="0" stop-color="#c4c8cc"/><stop offset="1" stop-color="#888c92"/></linearGradient></defs><path d="M1.3 14.1 C4 11 10 5.5 15.5 2.1 L23.7 7.4 L23.7 17.1 L9.4 25.2 L1.3 20.8 Z" fill="#c8ccd0"/><path d="M15.5 2.1 L23.7 7.4 L14.7 13 L9.4 8.3 C11 6 13 4 15.5 2.1Z" fill="url(#g21)"/><path d="M14.7 13 L23.7 7.4 L23.7 17.1 L9.4 25.2 L9.4 19.5 Z" fill="url(#g20)"/><path d="M1.3 14.1 C3 12 6 10 9.4 8.3 L14.7 13 L9.4 19.5 Z" fill="#e8eaec"/><path d="M1.3 14.1 L9.4 19.5 L9.4 25.2 L1.3 20.8 Z" fill="#b4b8bc"/><path d="M1.3 14.1 C4 11 10 5.5 15.5 2.1 L23.7 7.4 L23.7 17.1 L9.4 25.2 L1.3 20.8 Z" fill="none" stroke="#3c3c3c" stroke-width="1.15" stroke-linejoin="round"/><path d="M9.4 19.5 L14.7 13 L23.7 7.4 M9.4 19.5 V25.2" fill="none" stroke="#3c3c3c" stroke-width="0.7" opacity="0.75"/><path d="M1.3 20.5 L1.3 14.1 C4 11 10 5.5 15.5 2.1 L23.7 7.4 M1.3 14.1 L9.4 19.5 C11 16 17 10 23.7 7.4" fill="none" stroke="#e01818" stroke-width="1.3"/></svg></g></g><polygon points="26.0,-1.0 27.2,2.3 30.8,2.5 28.0,4.6 28.9,8.0 26.0,6.1 23.1,8.0 24.0,4.6 21.2,2.5 24.8,2.3" fill="#ff5a10" stroke="#ffb030" stroke-width="0.6"/><path d="M30.5 28 L30.5 23 L25.5 28 Z" fill="#585858"/></svg>
<svg class="abs" style="left:1px;top:288px;overflow:visible" width="32" height="32" viewBox="0 0 32 32"><g transform="translate(2 3)"><g transform="translate(-1 -3) scale(1.1)"><svg width="26" height="27" viewBox="0 0 26 27" overflow="visible"><defs><linearGradient id="g22" x1="0" y1="0" x2="1" y2="1"><stop offset="0" stop-color="#ffffff"/><stop offset="1" stop-color="#a8acb2"/></linearGradient><linearGradient id="g23" x1="0" y1="0" x2="1" y2="0.6"><stop offset="0" stop-color="#c4c8cc"/><stop offset="1" stop-color="#888c92"/></linearGradient></defs><path d="M1.3 14.1 C4 11 10 5.5 15.5 2.1 L23.7 7.4 L23.7 17.1 L9.4 25.2 L1.3 20.8 Z" fill="#c8ccd0"/><path d="M15.5 2.1 L23.7 7.4 L14.7 13 L9.4 8.3 C11 6 13 4 15.5 2.1Z" fill="url(#g23)"/><path d="M14.7 13 L23.7 7.4 L23.7 17.1 L9.4 25.2 L9.4 19.5 Z" fill="url(#g22)"/><path d="M1.3 14.1 C3 12 6 10 9.4 8.3 L14.7 13 L9.4 19.5 Z" fill="#e8eaec"/><path d="M1.3 14.1 L9.4 19.5 L9.4 25.2 L1.3 20.8 Z" fill="#b4b8bc"/><path d="M1.3 14.1 C4 11 10 5.5 15.5 2.1 L23.7 7.4 L23.7 17.1 L9.4 25.2 L1.3 20.8 Z" fill="none" stroke="#3c3c3c" stroke-width="1.15" stroke-linejoin="round"/><path d="M9.4 19.5 L14.7 13 L23.7 7.4 M9.4 19.5 V25.2" fill="none" stroke="#3c3c3c" stroke-width="0.7" opacity="0.75"/><circle cx="1.5" cy="20.5" r="1.7" fill="#e81818"/><circle cx="1.5" cy="14" r="1.7" fill="#e81818"/><circle cx="15.5" cy="2.3" r="1.7" fill="#e81818"/><circle cx="23.5" cy="7.6" r="1.7" fill="#e81818"/><circle cx="9.4" cy="25" r="1.7" fill="#e81818"/><circle cx="23.5" cy="17" r="1.7" fill="#e81818"/><circle cx="8" cy="13" r="1.7" fill="#e81818"/><circle cx="15" cy="19" r="1.7" fill="#e81818"/></svg></g></g><polygon points="26.0,-1.0 27.2,2.3 30.8,2.5 28.0,4.6 28.9,8.0 26.0,6.1 23.1,8.0 24.0,4.6 21.2,2.5 24.8,2.3" fill="#ff5a10" stroke="#ffb030" stroke-width="0.6"/><path d="M30.5 28 L30.5 23 L25.5 28 Z" fill="#585858"/></svg>
<svg class="abs" style="left:1px;top:322.5px;overflow:visible" width="32" height="32" viewBox="0 0 32 32"><g transform="translate(2 3)"><g transform="translate(-1 -3) scale(1.1)"><svg width="26" height="27" viewBox="0 0 26 27" overflow="visible"><defs><linearGradient id="g24" x1="0" y1="0" x2="1" y2="1"><stop offset="0" stop-color="#ffffff"/><stop offset="1" stop-color="#a8acb2"/></linearGradient><linearGradient id="g25" x1="0" y1="0" x2="1" y2="0.6"><stop offset="0" stop-color="#c4c8cc"/><stop offset="1" stop-color="#888c92"/></linearGradient></defs><path d="M1.3 14.1 C4 11 10 5.5 15.5 2.1 L23.7 7.4 L23.7 17.1 L9.4 25.2 L1.3 20.8 Z" fill="#c8ccd0"/><path d="M15.5 2.1 L23.7 7.4 L14.7 13 L9.4 8.3 C11 6 13 4 15.5 2.1Z" fill="url(#g25)"/><path d="M14.7 13 L23.7 7.4 L23.7 17.1 L9.4 25.2 L9.4 19.5 Z" fill="url(#g24)"/><path d="M1.3 14.1 C3 12 6 10 9.4 8.3 L14.7 13 L9.4 19.5 Z" fill="#e8eaec"/><path d="M1.3 14.1 L9.4 19.5 L9.4 25.2 L1.3 20.8 Z" fill="#b4b8bc"/><path d="M1.3 14.1 C4 11 10 5.5 15.5 2.1 L23.7 7.4 L23.7 17.1 L9.4 25.2 L1.3 20.8 Z" fill="none" stroke="#b0b0b0" stroke-width="1.15" stroke-linejoin="round"/><path d="M9.4 19.5 L14.7 13 L23.7 7.4 M9.4 19.5 V25.2" fill="none" stroke="#b0b0b0" stroke-width="0.7" opacity="0.75"/><rect x="6" y="0.500" width="18" height="18" fill="none" stroke="#e01818" stroke-width="1.1" stroke-dasharray="2.2 1.400"/></svg></g></g><polygon points="26.0,-1.0 27.2,2.3 30.8,2.5 28.0,4.6 28.9,8.0 26.0,6.1 23.1,8.0 24.0,4.6 21.2,2.5 24.8,2.3" fill="#ff5a10" stroke="#ffb030" stroke-width="0.6"/><path d="M30.5 28 L30.5 23 L25.5 28 Z" fill="#585858"/></svg>
<div class="abs grip-h" style="left:2px;top:358px;width:30px;height:5px;"></div>
<div class="ltbtn" style="top:367.5px"></div>
<div class="ltbtn" style="top:401.5px"></div>
<div class="ltbtn" style="top:436.5px"></div>
<div class="ltbtn" style="top:471.5px"></div>
<svg class="abs" style="left:1px;top:367px;overflow:visible" width="32" height="32" viewBox="0 0 32 32"><text x="2.5" y="12" font-family="Liberation Sans,sans-serif" font-weight="bold" font-size="11.5" fill="#1c2c78">S</text><g transform="translate(6 6) scale(0.88)"><g transform="translate(-1 -3) scale(1.1)"><svg width="26" height="27" viewBox="0 0 26 27" overflow="visible"><defs><linearGradient id="g26" x1="0" y1="0" x2="1" y2="1"><stop offset="0" stop-color="#ffffff"/><stop offset="1" stop-color="#a8acb2"/></linearGradient><linearGradient id="g27" x1="0" y1="0" x2="1" y2="0.6"><stop offset="0" stop-color="#c4c8cc"/><stop offset="1" stop-color="#888c92"/></linearGradient></defs><path d="M1.3 14.1 C4 11 10 5.5 15.5 2.1 L23.7 7.4 L23.7 17.1 L9.4 25.2 L1.3 20.8 Z" fill="#c8ccd0"/><path d="M15.5 2.1 L23.7 7.4 L14.7 13 L9.4 8.3 C11 6 13 4 15.5 2.1Z" fill="url(#g27)"/><path d="M14.7 13 L23.7 7.4 L23.7 17.1 L9.4 25.2 L9.4 19.5 Z" fill="url(#g26)"/><path d="M1.3 14.1 C3 12 6 10 9.4 8.3 L14.7 13 L9.4 19.5 Z" fill="#e8eaec"/><path d="M1.3 14.1 L9.4 19.5 L9.4 25.2 L1.3 20.8 Z" fill="#b4b8bc"/><path d="M1.3 14.1 C4 11 10 5.5 15.5 2.1 L23.7 7.4 L23.7 17.1 L9.4 25.2 L1.3 20.8 Z" fill="none" stroke="#3c3c3c" stroke-width="1.15" stroke-linejoin="round"/><path d="M9.4 19.5 L14.7 13 L23.7 7.4 M9.4 19.5 V25.2" fill="none" stroke="#3c3c3c" stroke-width="0.7" opacity="0.75"/><path d="M2.5 13 L11 8 L16 11 L8 16.5Z M5 9 L13.5 4 L18.5 7 L10 12Z" fill="#2a80e8"/><path d="M4 12.5 L11 8.5 L13 9.7 L6 14Z" fill="#a8d4ff"/></svg></g></g></svg>
<svg class="abs" style="left:1px;top:401px;overflow:visible" width="32" height="32" viewBox="0 0 32 32"><text x="2.5" y="12" font-family="Liberation Sans,sans-serif" font-weight="bold" font-size="11.5" fill="#1c2c78">H</text><path d="M12 8 h13 v6 h-13z" fill="#a8acb0" stroke="#585c60" stroke-width="0.8"/><path d="M10.5 13.5 h16 v3.5 h-16z" fill="#888c90" stroke="#505458" stroke-width="0.7"/><path d="M13 17 L24 17 L19.5 28.5 L17.5 28.5Z" fill="#5aa0e0" stroke="#2a5890" stroke-width="0.7"/><path d="M15.5 17 L18 17 L18.3 28Z" fill="#b8dcff"/><path d="M15 8v6M18.5 8v6M22 8v6" stroke="#e0e0e0" stroke-width="0.9"/></svg>
<svg class="abs" style="left:1px;top:436px;overflow:visible" width="32" height="32" viewBox="0 0 32 32"><text x="2.5" y="12" font-family="Liberation Sans,sans-serif" font-weight="bold" font-size="11.5" fill="#1c2c78">R</text><g transform="translate(6 6) scale(0.88)"><g transform="translate(-1 -3) scale(1.1)"><svg width="26" height="27" viewBox="0 0 26 27" overflow="visible"><defs><linearGradient id="g28" x1="0" y1="0" x2="1" y2="1"><stop offset="0" stop-color="#ffffff"/><stop offset="1" stop-color="#a8acb2"/></linearGradient><linearGradient id="g29" x1="0" y1="0" x2="1" y2="0.6"><stop offset="0" stop-color="#c4c8cc"/><stop offset="1" stop-color="#888c92"/></linearGradient></defs><path d="M1.3 14.1 C4 11 10 5.5 15.5 2.1 L23.7 7.4 L23.7 17.1 L9.4 25.2 L1.3 20.8 Z" fill="#c8ccd0"/><path d="M15.5 2.1 L23.7 7.4 L14.7 13 L9.4 8.3 C11 6 13 4 15.5 2.1Z" fill="url(#g29)"/><path d="M14.7 13 L23.7 7.4 L23.7 17.1 L9.4 25.2 L9.4 19.5 Z" fill="url(#g28)"/><path d="M1.3 14.1 C3 12 6 10 9.4 8.3 L14.7 13 L9.4 19.5 Z" fill="#e8eaec"/><path d="M1.3 14.1 L9.4 19.5 L9.4 25.2 L1.3 20.8 Z" fill="#b4b8bc"/><path d="M1.3 14.1 C4 11 10 5.5 15.5 2.1 L23.7 7.4 L23.7 17.1 L9.4 25.2 L1.3 20.8 Z" fill="none" stroke="#3c3c3c" stroke-width="1.15" stroke-linejoin="round"/><path d="M9.4 19.5 L14.7 13 L23.7 7.4 M9.4 19.5 V25.2" fill="none" stroke="#3c3c3c" stroke-width="0.7" opacity="0.75"/><path d="M13 6.5 L19 3.5 L20.5 5 L14.5 8Z" fill="#e82020"/><path d="M8 14 L8 9.5 M8 14 L4 17.5 M8 14 L12.5 16.5" stroke="#e82020" stroke-width="1.6"/><path d="M8 8 L6.5 11 L9.5 11Z M2.5 18.5 L5.8 17.8 L4 15.5Z M14.5 17.5 L11.5 17.5 L12.8 14.8Z" fill="#e82020"/></svg></g></g></svg>
<svg class="abs" style="left:1px;top:471px;overflow:visible" width="32" height="32" viewBox="0 0 32 32"><text x="2.5" y="12" font-family="Liberation Sans,sans-serif" font-weight="bold" font-size="11.5" fill="#1c2c78">A</text><path d="M17 3 L24.5 1.5 C27 7 26 13 22.5 17.5 L17.5 16 C16 11 16 7 17 3Z" fill="#7aa0d0" stroke="#48689c" stroke-width="0.7"/><path d="M17.5 16 L22.5 17.5 L20.5 21.5 L17 20.5Z" fill="#c09028"/><path d="M17 20.5 L20.5 21.5 L17 25.5Z" fill="#806010"/><ellipse cx="15" cy="26" rx="8" ry="2.5" fill="#a8d8f0" opacity="0.7"/></svg>
<div class="abs grip-h" style="left:2px;top:508px;width:30px;height:5px;"></div>
<svg class="abs" style="left:1px;top:516px;overflow:visible" width="32" height="32" viewBox="0 0 32 32"><g transform="translate(1 3)"><path d="M2.5 1 V12" stroke="#f03030" stroke-width="1.1" stroke-dasharray="1.4 1.2"/><circle cx="2.5" cy="13" r="1.5" fill="#f03030"/><path d="M4 15 L11 9 L13.5 11 L7.5 16.5 L10 18.5 L16.5 12.5 L19 14.5 L13 20" fill="none" stroke="#a89800" stroke-width="3.4" stroke-linejoin="round"/><path d="M4 15 L11 9 L13.5 11 L7.5 16.5 L10 18.5 L16.5 12.5 L19 14.5 L13 20" fill="none" stroke="#f4e810" stroke-width="1.9" stroke-linejoin="round"/></g><path d="M20 1.5 L26 1 L27 7 L24 10.5 L20 9Z" fill="#d8a000" stroke="#806000" stroke-width="0.6"/><path d="M22 2 L25 8 M20.5 5 L23 9.5" stroke="#403000" stroke-width="1.3"/><path d="M16 14 L27 20.5 L16 27Z" fill="#1c50e0" stroke="#0c2c90" stroke-width="0.6"/><path d="M30.5 30 L30.5 25 L25.5 30 Z" fill="#585858"/></svg>
<svg class="abs" style="left:1px;top:550px;overflow:visible" width="32" height="32" viewBox="0 0 32 32"><g transform="translate(1 0)"><path d="M2.5 1 V12" stroke="#f03030" stroke-width="1.1" stroke-dasharray="1.4 1.2"/><circle cx="2.5" cy="13" r="1.5" fill="#f03030"/><path d="M4 15 L11 9 L13.5 11 L7.5 16.5 L10 18.5 L16.5 12.5 L19 14.5 L13 20" fill="none" stroke="#a89800" stroke-width="3.4" stroke-linejoin="round"/><path d="M4 15 L11 9 L13.5 11 L7.5 16.5 L10 18.5 L16.5 12.5 L19 14.5 L13 20" fill="none" stroke="#f4e810" stroke-width="1.9" stroke-linejoin="round"/></g><rect x="7.500" y="10.5" width="19" height="17" fill="none" stroke="#2030e0" stroke-width="1.3" stroke-dasharray="2.4 1.6"/><path d="M15 18 L23 26 M23 18 L15 26" stroke="#f08868" stroke-width="3.2" stroke-linecap="round"/><path d="M30.5 30.5 L30.5 26.5 L26.5 30.5 Z" fill="#585858"/></svg>
<svg class="abs" style="left:1px;top:586px;overflow:visible" width="32" height="32" viewBox="0 0 32 32"><g transform="translate(1 1)"><path d="M2.5 1 V12" stroke="#f03030" stroke-width="1.1" stroke-dasharray="1.4 1.2"/><circle cx="2.5" cy="13" r="1.5" fill="#f03030"/><path d="M4 15 L11 9 L13.5 11 L7.5 16.5 L10 18.5 L16.5 12.5 L19 14.5 L13 20" fill="none" stroke="#a89800" stroke-width="3.4" stroke-linejoin="round"/><path d="M4 15 L11 9 L13.5 11 L7.5 16.5 L10 18.5 L16.5 12.5 L19 14.5 L13 20" fill="none" stroke="#f4e810" stroke-width="1.9" stroke-linejoin="round"/></g><rect x="11" y="9.500" width="16" height="18" fill="#e8f0ff" stroke="#2a50c0" stroke-width="1.2"/><path d="M11 13.5h16M11 17.500h16M11 21.5h16M15.5 9.5v18M21.500 9.5v18" stroke="#2a50c0" stroke-width="0.9"/><rect x="12" y="10.5" width="14" height="2.500" fill="#3060d8"/><polygon points="26.0,1.0 27.2,4.3 30.8,4.5 28.0,6.6 28.9,10.0 26.0,8.1 23.1,10.0 24.0,6.6 21.2,4.5 24.8,4.3" fill="#ff5a10" stroke="#ffb030" stroke-width="0.6"/><path d="M30.5 30 L30.5 25.5 L26.0 30 Z" fill="#585858"/></svg>
<div class="abs grip-h" style="left:2px;top:624px;width:30px;height:5px;"></div>
<svg class="abs" style="left:1px;top:632px;overflow:visible" width="32" height="32" viewBox="0 0 32 32"><g transform="translate(3 8) scale(0.95)"><g transform="translate(-1 -3) scale(1.1)"><svg width="26" height="27" viewBox="0 0 26 27" overflow="visible"><defs><linearGradient id="g30" x1="0" y1="0" x2="1" y2="1"><stop offset="0" stop-color="#ffffff"/><stop offset="1" stop-color="#a8acb2"/></linearGradient><linearGradient id="g31" x1="0" y1="0" x2="1" y2="0.6"><stop offset="0" stop-color="#c4c8cc"/><stop offset="1" stop-color="#888c92"/></linearGradient></defs><path d="M1.3 14.1 C4 11 10 5.5 15.5 2.1 L23.7 7.4 L23.7 17.1 L9.4 25.2 L1.3 20.8 Z" fill="#c8ccd0"/><path d="M15.5 2.1 L23.7 7.4 L14.7 13 L9.4 8.3 C11 6 13 4 15.5 2.1Z" fill="url(#g31)"/><path d="M14.7 13 L23.7 7.4 L23.7 17.1 L9.4 25.2 L9.4 19.5 Z" fill="url(#g30)"/><path d="M1.3 14.1 C3 12 6 10 9.4 8.3 L14.7 13 L9.4 19.5 Z" fill="#e8eaec"/><path d="M1.3 14.1 L9.4 19.5 L9.4 25.2 L1.3 20.8 Z" fill="#b4b8bc"/><path d="M1.3 14.1 C4 11 10 5.5 15.5 2.1 L23.7 7.4 L23.7 17.1 L9.4 25.2 L1.3 20.8 Z" fill="none" stroke="#3c3c3c" stroke-width="1.15" stroke-linejoin="round"/><path d="M9.4 19.5 L14.7 13 L23.7 7.4 M9.4 19.5 V25.2" fill="none" stroke="#3c3c3c" stroke-width="0.7" opacity="0.75"/></svg></g></g><g transform="translate(2 -1)"><path d="M2.5 1 V12" stroke="#f03030" stroke-width="1.1" stroke-dasharray="1.4 1.2"/><circle cx="2.5" cy="13" r="1.5" fill="#f03030"/><path d="M4 15 L11 9 L13.5 11 L7.5 16.5 L10 18.5 L16.5 12.5 L19 14.5 L13 20" fill="none" stroke="#a89800" stroke-width="3.4" stroke-linejoin="round"/><path d="M4 15 L11 9 L13.5 11 L7.5 16.5 L10 18.5 L16.5 12.5 L19 14.5 L13 20" fill="none" stroke="#f4e810" stroke-width="1.9" stroke-linejoin="round"/></g><polygon points="26.0,0.0 27.2,3.3 30.8,3.5 28.0,5.6 28.9,9.0 26.0,7.1 23.1,9.0 24.0,5.6 21.2,3.5 24.8,3.3" fill="#ff5a10" stroke="#ffb030" stroke-width="0.6"/><path d="M30.5 30 L30.5 25 L25.5 30 Z" fill="#585858"/></svg>
<svg class="abs" style="left:1px;top:667px;overflow:visible" width="32" height="32" viewBox="0 0 32 32"><g transform="translate(1 0)"><path d="M2.5 1 V12" stroke="#f03030" stroke-width="1.1" stroke-dasharray="1.4 1.2"/><circle cx="2.5" cy="13" r="1.5" fill="#f03030"/><path d="M4 15 L11 9 L13.5 11 L7.5 16.5 L10 18.5 L16.5 12.5 L19 14.5 L13 20" fill="none" stroke="#a89800" stroke-width="3.4" stroke-linejoin="round"/><path d="M4 15 L11 9 L13.5 11 L7.5 16.5 L10 18.5 L16.5 12.5 L19 14.5 L13 20" fill="none" stroke="#f4e810" stroke-width="1.9" stroke-linejoin="round"/></g><path d="M19 8 L29 7 L23 14.5 L28 14 L17 27 L20.500 18 L15.500 18.5Z" fill="#f0d020" stroke="#c03010" stroke-width="1"/><path d="M20 18.5 L25 17 L17 27Z" fill="#e84010"/><path d="M30.5 30.5 L30.5 25.5 L25.5 30.5 Z" fill="#585858"/></svg>
<svg class="abs" style="left:1px;top:702px;overflow:visible" width="32" height="32" viewBox="0 0 32 32"><path d="M9 2.500 L24.500 5.500 L22 19 L7 15Z" fill="#505458" stroke="#303438" stroke-width="0.8"/><path d="M10.5 4.500 L22.500 7 L20.500 17 L9 14Z" fill="#2a58e0"/><path d="M10.5 4.5 L16 5.700 L12 14.8 L9 14Z" fill="#80a8ff" opacity="0.7"/><path d="M7 15 L22 19 L18 27.500 L1 22Z" fill="#787c80" stroke="#404448" stroke-width="0.8"/><path d="M6 17.500 L18.500 21 M4.500 19.500 L17.500 23" stroke="#303438" stroke-width="1.2" stroke-dasharray="1.2 0.8"/><path d="M18 27.500 L28 25" stroke="#a0a0a0" stroke-width="1.5" opacity="0.6"/></svg>
<div class="abs grip-h" style="left:1734px;top:58px;width:24px;height:5px;"></div>
<div class="rtbtn" style="top:65px;height:26px"></div>
<svg class="abs" style="left:1735px;top:67px;overflow:visible" width="24" height="24" viewBox="0 0 24 24"><path d="M2 10 C5 6 8 3.500 12 1 C15 3 18 6 20 10 C17 14 14 18 11 21.500 C7 18 4 14 2 10Z" fill="#1c78e0" stroke="#0c48a8" stroke-width="0.8"/><path d="M4 10 C7 6.500 9 5 12 3 L15 5.500 C12 7.500 10 10 7.500 13.500Z" fill="#6ab8ff" opacity="0.8"/><path d="M5 13 C9 13 11 9 12.500 5 M8 17 C12 16 14 12 17 8" fill="none" stroke="#e8f4ff" stroke-width="1.1"/><path d="M17.500 16 L23.500 19 L17.500 22.500Z" fill="#f4f4f4" stroke="#707070" stroke-width="0.8"/></svg>
<svg class="abs" style="left:1735px;top:96px;overflow:visible" width="24" height="24" viewBox="0 0 24 24"><path d="M12.0 0.0 L21.5 4.6 L12.0 9.1 L2.5 4.6 Z" fill="#3a94f0" opacity="1"/><path d="M2.5 4.6 L12.0 9.1 L12.0 19.0 L2.5 14.4 Z" fill="#e828c0" opacity="1"/><path d="M21.5 4.6 L12.0 9.1 L12.0 19.0 L21.5 14.4 Z" fill="#2a78d8" opacity="1"/><path d="M1.5 12.5 L7.5 18.5 M7.5 12.5 L1.5 18.5" stroke="#e81c24" stroke-width="2.4" stroke-linecap="round"/></svg>
<svg class="abs" style="left:1735px;top:122.5px;overflow:visible" width="24" height="24" viewBox="0 0 24 24"><path d="M12.0 0.0 L21.5 4.6 L12.0 9.1 L2.5 4.6 Z" fill="#3a94f0" opacity="1"/><path d="M2.5 4.6 L12.0 9.1 L12.0 19.0 L2.5 14.4 Z" fill="#2a7ad8" opacity="1"/><path d="M21.5 4.6 L12.0 9.1 L12.0 19.0 L21.5 14.4 Z" fill="#2068c4" opacity="1"/></svg>
<svg class="abs" style="left:1735px;top:150px;overflow:visible" width="24" height="24" viewBox="0 0 24 24"><path d="M12.0 0.0 L21.5 4.6 L12.0 9.1 L2.5 4.6 Z" fill="#3a94f0" opacity="1"/><path d="M2.5 4.6 L12.0 9.1 L12.0 19.0 L2.5 14.4 Z" fill="#e828c0" opacity="1"/><path d="M21.5 4.6 L12.0 9.1 L12.0 19.0 L21.5 14.4 Z" fill="#2a78d8" opacity="1"/><path d="M7 9 C7 5.500 11 4.500 13.500 6 L14.500 4 L17 8.500 L12 9.500 L12.800 7.500 C11 6.800 9.500 7.500 9.500 9.500Z M17 11 C17 14.500 13 15.500 10.500 14 L9.500 16 L7 11.500 L12 10.500 L11.200 12.500 C13 13.200 14.500 12.500 14.500 10.500Z" fill="#f8e020" stroke="#b09000" stroke-width="0.5"/></svg>
<svg class="abs" style="left:1735px;top:178px;overflow:visible" width="24" height="24" viewBox="0 0 24 24"><path d="M12.0 0.0 L21.5 4.6 L12.0 9.1 L2.5 4.6 Z" fill="#3a94f0" opacity="1"/><path d="M2.5 4.6 L12.0 9.1 L12.0 19.0 L2.5 14.4 Z" fill="#e828c0" opacity="1"/><path d="M21.5 4.6 L12.0 9.1 L12.0 19.0 L21.5 14.4 Z" fill="#2a78d8" opacity="1"/><path d="M14.5 1.5 L20.5 7.5 M20.5 1.5 L14.5 7.5" stroke="#e81c24" stroke-width="2.4" stroke-linecap="round"/></svg>
<div class="abs grip-h" style="left:1734px;top:205px;width:24px;height:5px;"></div>
<div class="rtbtn" style="top:212px;height:27px"></div>
<svg class="abs" style="left:1735px;top:214px;overflow:visible" width="24" height="24" viewBox="0 0 24 24"><defs><linearGradient id="g32" x1="0" y1="0" x2="1" y2="1"><stop offset="0" stop-color="#fff"/><stop offset="0.500" stop-color="#c0c4c8"/><stop offset="1" stop-color="#686c70"/></linearGradient></defs><path d="M2 12 C3 8 8 4 14 2 L22 6.500 L22 14 L9 21 L2 16.500Z" fill="url(#g32)" stroke="#303030" stroke-width="1.1" stroke-linejoin="round"/><path d="M9 14 L22 6.800 L22 14 L9 21Z" fill="#60646a" opacity="0.45"/><rect x="20.5" y="19" width="1.6" height="3.2" fill="#f07020"/></svg>
<svg class="abs" style="left:1735px;top:242px;overflow:visible" width="24" height="24" viewBox="0 0 24 24"><path d="M3 5 L3 21 L19 21 L22 18 L8 18 L8 5Z" fill="#e4e4e4" stroke="#404040" stroke-width="0.9"/><path d="M8 7 C11 10 14 10 18 8 C17 13 16 15 15 18 L8 18Z" fill="#2a90f0" stroke="#1c58b0" stroke-width="0.6"/><path d="M15 3 L22 1 L20 8Z" fill="#f8f8f8" stroke="#606060" stroke-width="0.9"/></svg>
<div class="abs grip-h" style="left:1734px;top:271px;width:24px;height:5px;"></div>
<svg class="abs" style="left:1735px;top:280px;overflow:visible" width="24" height="24" viewBox="0 0 24 24"><path d="M8 2 h9 v12 h-9z" fill="#a4a8ac" stroke="#505458" stroke-width="0.7"/><path d="M10 4 h5 v6 h-5z" fill="#686c70"/><path d="M2 15 L8 12.500 L20 14.500 L14 18Z" fill="#c8ccd0" stroke="#505458" stroke-width="0.6"/><path d="M2 15 L14 18 L14 22 L2 19Z" fill="#808488"/><path d="M14 18 L20 14.500 L20 18.500 L14 22Z" fill="#5c6064"/><rect x="20.5" y="18" width="1.6" height="3.2" fill="#f07020"/></svg>
<svg class="abs" style="left:1735px;top:309px;overflow:visible" width="24" height="24" viewBox="0 0 24 24"><path d="M2 12 h5 v-4 h4 v4 h6 v-5 h2 v8 h-17z" fill="#787c80" stroke="#505050" stroke-width="0.6"/><path d="M21.500 2 V17" stroke="#909090" stroke-width="0.8"/></svg>
<div class="rtbtn" style="top:333px;height:26px"></div>
<svg class="abs" style="left:1735px;top:335px;overflow:visible" width="24" height="24" viewBox="0 0 24 24"><g transform="translate(1 0)"><path d="M5 1.500 h12 v5.500 h-12z" fill="#9a9ea4" stroke="#505458" stroke-width="0.7"/><path d="M3.500 6.500 h15 v3.500 h-15z" fill="#7c8086" stroke="#484c50" stroke-width="0.7"/><path d="M5.500 10 L16.500 10 L12.500 21 L10 21Z" fill="#4a98e0" stroke="#2a5890" stroke-width="0.7"/><path d="M8 10 L10.5 10 L11 20.500Z" fill="#fff" opacity="0.45"/><path d="M8 1.500v5.500M11 1.500v5.500M14 1.500v5.500" stroke="#e4e4e4" stroke-width="0.8"/></g><rect x="20.5" y="19" width="1.6" height="3.2" fill="#f07020"/></svg>
<div class="rtbtn" style="top:361px;height:26px"></div>
<svg class="abs" style="left:1735px;top:363px;overflow:visible" width="24" height="24" viewBox="0 0 24 24"><defs><linearGradient id="g33" x1="0" x2="1"><stop offset="0" stop-color="#f8d020"/><stop offset="0.5" stop-color="#e0a800"/><stop offset="1" stop-color="#906800"/></linearGradient></defs><path d="M6 3 C6 1 17 1 17 3 L17 20 C17 22 6 22 6 20Z" fill="url(#g33)" stroke="#705000" stroke-width="0.6"/><ellipse cx="11.500" cy="3" rx="5.500" ry="1.800" fill="#ffe860"/><path d="M7 18 L15 8 M9 21 L16.500 12 M6.500 13 L12 6" stroke="#302000" stroke-width="1.600"/><rect x="20.5" y="19" width="1.6" height="3.2" fill="#f07020"/></svg>
<svg class="abs" style="left:1735px;top:390px;overflow:visible" width="24" height="24" viewBox="0 0 24 24"><path d="M5 1 h7 v11 h-7z" fill="#e0a800" stroke="#705000" stroke-width="0.600"/><path d="M6 9 L11 3" stroke="#302000" stroke-width="1.400"/><circle cx="8.500" cy="8.500" r="2" fill="#8090f0"/><path d="M9 10 L9 13 M9 13 L17 9.500 M9 13 L16 19" stroke="#404040" stroke-width="0.800"/><path d="M9.500 12.500 L17 9" stroke="#e01818" stroke-width="2.200"/><path d="M20.500 7.500 L15 8 L17 12Z" fill="#e01818"/><path d="M9.500 13.500 L16 18.500" stroke="#18b028" stroke-width="2.200"/><path d="M19.500 21 L14 19.500 L17.500 15.500Z" fill="#18c028"/></svg>
<svg class="abs" style="left:1735px;top:418px;overflow:visible" width="24" height="24" viewBox="0 0 24 24"><g transform="translate(2 0)"><path d="M5 1.500 h12 v5.500 h-12z" fill="#9a9ea4" stroke="#505458" stroke-width="0.7"/><path d="M3.500 6.500 h15 v3.500 h-15z" fill="#7c8086" stroke="#484c50" stroke-width="0.7"/><path d="M5.500 10 L16.500 10 L12.500 21 L10 21Z" fill="#e03038" stroke="#901018" stroke-width="0.7"/><path d="M8 10 L10.5 10 L11 20.500Z" fill="#fff" opacity="0.45"/><path d="M8 1.500v5.500M11 1.500v5.500M14 1.500v5.500" stroke="#e4e4e4" stroke-width="0.8"/></g><polygon points="5,6 6.500,10 10.500,10.500 7.300,13 8.500,17 5,14.600 1.500,17 2.700,13 -0.500,10.500 3.500,10" fill="#ff8010" stroke="#ffd040" stroke-width="0.5"/><rect x="20.5" y="18" width="1.6" height="3.2" fill="#f07020"/></svg>
<div class="abs grip-h" style="left:1734px;top:446px;width:24px;height:5px;"></div>
<div class="rtbtn" style="top:453px;height:25px"></div>
<svg class="abs" style="left:1735px;top:454px;overflow:visible" width="24" height="24" viewBox="0 0 24 24"><path d="M3.500 2 V11 M21.500 0 V7.500" stroke="#f03030" stroke-width="1.100" stroke-dasharray="1.400 1.100"/><rect x="2.300" y="11" width="2.600" height="2.600" fill="#f07020"/><rect x="20.300" y="7.500" width="2.600" height="2.600" fill="#f07020"/><path d="M2.1 15 L7.7 22.5 M21 10.9 L13.5 8.6 L10.3 11.2 L17.6 16.8 L12.6 22.5" fill="none" stroke="#b0a400" stroke-width="3.5" stroke-linejoin="round" stroke-linecap="round" opacity="0.6"/><path d="M2.1 15 L7.7 22.5 M21 10.9 L13.5 8.6 L10.3 11.2 L17.6 16.8 L12.6 22.5" fill="none" stroke="#f4ec10" stroke-width="2.6" stroke-linejoin="round" stroke-linecap="round"/></svg>
<div class="rtbtn" style="top:479.5px;height:26px"></div>
<svg class="abs" style="left:1735px;top:481px;overflow:visible" width="24" height="24" viewBox="0 0 24 24"><rect x="2" y="1.500" width="3" height="2.600" fill="#f01818"/><rect x="2" y="5.500" width="3" height="2" fill="#f01818"/><rect x="19" y="2" width="3.200" height="3" fill="#f01818"/><path d="M2.1 15 L7.7 22.5 M21 10.9 L13.5 8.6 L10.3 11.2 L17.6 16.8 L12.6 22.5" fill="none" stroke="#b0a400" stroke-width="3.5" stroke-linejoin="round" stroke-linecap="round" opacity="0.6"/><path d="M2.1 15 L7.7 22.5 M21 10.9 L13.5 8.6 L10.3 11.2 L17.6 16.8 L12.6 22.5" fill="none" stroke="#f4ec10" stroke-width="2.6" stroke-linejoin="round" stroke-linecap="round"/></svg>
<div class="rtbtn" style="top:506.5px;height:26px"></div>
<svg class="abs" style="left:1735px;top:508px;overflow:visible" width="24" height="24" viewBox="0 0 24 24"><path d="M3.500 2 V11 M21.500 0 V7.500" stroke="#f03030" stroke-width="1.100" stroke-dasharray="1.400 1.100"/><rect x="2.300" y="11" width="2.600" height="2.600" fill="#f07020"/><rect x="20.300" y="7.500" width="2.600" height="2.600" fill="#f07020"/><path d="M2.1 15 L7.7 22.5 M21 10.9 L13.5 8.6 L10.3 11.2 L17.6 16.8 L12.6 22.5" fill="none" stroke="#d0d0a0" stroke-width="3.5" stroke-linejoin="round" stroke-linecap="round" opacity="0.6"/><path d="M2.1 15 L7.7 22.5 M21 10.9 L13.5 8.6 L10.3 11.2 L17.6 16.8 L12.6 22.5" fill="none" stroke="#f4f0b0" stroke-width="2.6" stroke-linejoin="round" stroke-linecap="round"/></svg>
<svg class="abs" style="left:1735px;top:534px;overflow:visible" width="24" height="24" viewBox="0 0 24 24"><path d="M4 12 L17 2 L19 4 L6 14 L8 16 L20 7" fill="none" stroke="#505050" stroke-width="1.800"/><path d="M6 19 L21 10 M10 21 L22 13" stroke="#606060" stroke-width="1"/></svg>
<svg class="abs" style="left:1735px;top:561px;overflow:visible" width="24" height="24" viewBox="0 0 24 24"><path d="M2 12 L12 2 L22 11 L11 22Z" fill="#f4f4f4" stroke="#505050" stroke-width="1.600"/><path d="M6 14 L10 17 L14 10 L10 8 L13 5.500 L18 9" fill="none" stroke="#606060" stroke-width="2.400"/></svg>
<svg class="abs" style="left:1735px;top:588px;overflow:visible" width="24" height="24" viewBox="0 0 24 24"><rect x="2.500" y="1.500" width="18" height="19" fill="none" stroke="#e81818" stroke-width="1.200" stroke-dasharray="2.400 1.500"/><path d="M4.6 8 L12.8 18.8 L19.4 9.9 L12.8 4.4 L21 3" fill="none" stroke="#b0a400" stroke-width="3.6999999999999997" stroke-linejoin="round" stroke-linecap="round" opacity="0.6"/><path d="M4.6 8 L12.8 18.8 L19.4 9.9 L12.8 4.4 L21 3" fill="none" stroke="#f4ec10" stroke-width="2.8" stroke-linejoin="round" stroke-linecap="round"/></svg>
<svg class="abs" style="left:1735px;top:616px;overflow:visible" width="24" height="24" viewBox="0 0 24 24"><path d="M3.8 9.6 L12 20.5 L18.6 11.1 L12.8 6.4 L21.5 4" fill="none" stroke="#b0a400" stroke-width="3.6999999999999997" stroke-linejoin="round" stroke-linecap="round" opacity="0.6"/><path d="M3.8 9.6 L12 20.5 L18.6 11.1 L12.8 6.4 L21.5 4" fill="none" stroke="#f4ec10" stroke-width="2.8" stroke-linejoin="round" stroke-linecap="round"/><path d="M12.8 0.500 L16.500 7.200 L9.500 7.200Z" fill="#f8b080" stroke="#f04810" stroke-width="1.500"/><rect x="19.5" y="18" width="1.6" height="3.2" fill="#f07020"/></svg>
<svg class="abs" style="left:1735px;top:642px;overflow:visible" width="24" height="24" viewBox="0 0 24 24"><path d="M3.8 9.3 L11.2 19 L18.6 12 L12 5.4 L17.5 2.7 L21.5 4.6" fill="none" stroke="#b0a400" stroke-width="3.5" stroke-linejoin="round" stroke-linecap="round" opacity="0.6"/><path d="M3.8 9.3 L11.2 19 L18.6 12 L12 5.4 L17.5 2.7 L21.5 4.6" fill="none" stroke="#f4ec10" stroke-width="2.6" stroke-linejoin="round" stroke-linecap="round"/><circle cx="3.8" cy="9.3" r="1.700" fill="#18a818"/><circle cx="11.2" cy="19" r="1.700" fill="#18a818"/><circle cx="18.6" cy="12" r="1.700" fill="#18a818"/><circle cx="12" cy="5.4" r="1.700" fill="#18a818"/><circle cx="17.5" cy="2.7" r="1.700" fill="#18a818"/><rect x="19.5" y="18" width="1.6" height="3.2" fill="#f07020"/></svg>
<svg class="abs" style="left:1735px;top:670px;overflow:visible" width="24" height="24" viewBox="0 0 24 24"><path d="M3 3 L7 14 L12 20 L20 12 L15 9 L19 3 M9 9 L12 13 L14 6" fill="none" stroke="#606060" stroke-width="2.200"/><path d="M3 3 L5 8 M20 12 L17 16" stroke="#404040" stroke-width="3"/></svg>
<svg class="abs" style="left:1735px;top:697px;overflow:visible" width="24" height="24" viewBox="0 0 24 24"><path d="M3 7 L9 20 L18 9 L13 4" fill="none" stroke="#b0a400" stroke-width="3.6999999999999997" stroke-linejoin="round" stroke-linecap="round" opacity="0.6"/><path d="M3 7 L9 20 L18 9 L13 4" fill="none" stroke="#f4ec10" stroke-width="2.8" stroke-linejoin="round" stroke-linecap="round"/><circle cx="8" cy="5.500" r="2.800" fill="none" stroke="#f03010" stroke-width="1.500"/><circle cx="9" cy="18.500" r="2.800" fill="none" stroke="#f03010" stroke-width="1.500"/><rect x="19.5" y="18" width="1.6" height="3.2" fill="#f07020"/></svg>
<svg class="abs" style="left:1735px;top:723px;overflow:visible" width="24" height="24" viewBox="0 0 24 24"><path d="M2 8 C3 3 9 1 12 5 L14 8 L8 14 L3 12Z" fill="#585858"/><path d="M8 14 L14 8 L21 14 L14 21Z" fill="#f8f8f8" stroke="#505050" stroke-width="1.800"/><path d="M13 6 L20 4 L21 8" fill="none" stroke="#505050" stroke-width="2"/></svg>
<svg class="abs" style="left:1735px;top:749px;overflow:visible" width="24" height="24" viewBox="0 0 24 24"><path d="M2 9 L11 1.500 L21 6 L13 21Z" fill="#1c68e0" stroke="#0c40a8" stroke-width="0.800"/><path d="M5 9 L11 4 L15 6 L9 14Z" fill="#6ab0ff" opacity="0.700"/><path d="M4 10 L12 20 L21 8 L14 5" fill="none" stroke="#b0a400" stroke-width="3.3" stroke-linejoin="round" stroke-linecap="round" opacity="0.6"/><path d="M4 10 L12 20 L21 8 L14 5" fill="none" stroke="#f4ec10" stroke-width="2.4" stroke-linejoin="round" stroke-linecap="round"/></svg>
<svg class="abs" style="left:1735px;top:776px;overflow:visible" width="24" height="24" viewBox="0 0 24 24"><path d="M4 1 V13" stroke="#18c828" stroke-width="2.600"/><path d="M4 17 L0.500 11 L7.500 11Z" fill="#18c828"/><path d="M19 20 V7" stroke="#e81818" stroke-width="2.600"/><path d="M19 2 L15.500 8.500 L22.500 8.500Z" fill="#e81818"/><path d="M3 18 L8 23 L15 23 L20 18" fill="none" stroke="#b0a400" stroke-width="3.1" stroke-linejoin="round" stroke-linecap="round" opacity="0.6"/><path d="M3 18 L8 23 L15 23 L20 18" fill="none" stroke="#f4ec10" stroke-width="2.2" stroke-linejoin="round" stroke-linecap="round"/><circle cx="4" cy="18" r="1.400" fill="#18a818"/></svg>
<svg class="abs" style="left:139px;top:1003px;overflow:visible" width="24" height="24" viewBox="0 0 24 24"><rect x="1.500" y="3.500" width="17" height="17" fill="#f8f0f0" stroke="#e03030" stroke-width="1" stroke-dasharray="1.500 1.200"/><path d="M4 8 L12 19 L18 6 L12 4" fill="none" stroke="#b0a400" stroke-width="3.1" stroke-linejoin="round" stroke-linecap="round" opacity="0.6"/><path d="M4 8 L12 19 L18 6 L12 4" fill="none" stroke="#f4ec10" stroke-width="2.2" stroke-linejoin="round" stroke-linecap="round"/></svg>
<svg class="abs" style="left:652px;top:1003px;overflow:visible" width="24" height="24" viewBox="0 0 24 24"><path transform="translate(1 2)" d="M0 0 L0 14 L3.500 11 L6 17 L8.500 16 L6 10 L10.500 10Z" fill="#d8dcf0" stroke="#202860" stroke-width="1"/><defs><radialGradient id="g34" cx="0.35" cy="0.3" r="0.8"><stop offset="0" stop-color="#f0f4ff"/><stop offset="1" stop-color="#8898d8"/></radialGradient></defs><circle cx="18" cy="7" r="5.5" fill="url(#g34)"/><text x="15.4" y="10.2" font-family="Liberation Sans,sans-serif" font-weight="bold" font-size="9" fill="#2838a0">?</text></svg>
<svg class="abs" style="left:685px;top:1003px;overflow:visible" width="24" height="24" viewBox="0 0 24 24"><path d="M4 0 L10 24 M4 4 L26 4" stroke="#3a60d0" stroke-width="1"/><circle cx="19" cy="10" r="6.500" fill="none" stroke="#3a60d0" stroke-width="1.300"/><path d="M19 6.500V13.500M15.500 10H22.500M16.500 7.500L21.500 12.500M21.500 7.500L16.500 12.500" stroke="#f02020" stroke-width="0.900"/><path d="M4.500 0.500V7.500M1 4H8M2 1.500L7 6.500M7 1.500L2 6.500" stroke="#f02020" stroke-width="0.900"/><circle cx="9.500" cy="22.500" r="1.300" fill="#f02020"/><g transform="translate(20 12) scale(0.700)"><path transform="translate(0 0)" d="M0 0 L0 14 L3.500 11 L6 17 L8.500 16 L6 10 L10.500 10Z" fill="#d8dcf0" stroke="#202860" stroke-width="1"/></g></svg>
<svg class="abs" style="left:719px;top:1003px;overflow:visible" width="24" height="24" viewBox="0 0 24 24"><path d="M3 9 L16 6 L19 17 L6 21Z" fill="#dce8f8" stroke="#404850" stroke-width="1" stroke-dasharray="2 1.500"/><path d="M14 3 L22 1.500 L20.500 9Z" fill="#f8f8f8" stroke="#202020" stroke-width="1"/><path d="M17 5 L13 9" stroke="#202020" stroke-width="1.400"/><circle cx="7" cy="21" r="1.200" fill="#f08020"/></svg>
<svg class="abs" style="left:749px;top:1003px;overflow:visible" width="24" height="24" viewBox="0 0 24 24"><path d="M2 14 C2 9 8 6 13 8 C18 10 21 14 19 18 C17 22 13 19 11 21 C8 23.500 2 20 2 14Z" fill="#f0b040" stroke="#a06010" stroke-width="0.700"/><circle cx="6" cy="13" r="1.700" fill="#e82020"/><circle cx="10" cy="11" r="1.700" fill="#20b030"/><circle cx="14.500" cy="13" r="1.700" fill="#2040e0"/><circle cx="7" cy="17.500" r="1.700" fill="#f0f020"/><path d="M13 10 L19 2 L21 3.500 L15 11.500Z" fill="#88a0d0" stroke="#405080" stroke-width="0.600"/><path d="M1 3 C3 0.500 7 0.500 9 3 L10.500 1.500 L10.500 6.500 L5.500 6 L7.500 4.500 C6 3 4 3 3 4Z" fill="#20b038"/></svg>
<svg class="abs" style="left:777px;top:1003px;overflow:visible" width="24" height="24" viewBox="0 0 24 24"><path d="M9 0.500 L14 2 L6 23 L1 21.500Z" fill="#e8a050" stroke="#905020" stroke-width="0.700"/><path d="M8 4 L11 5 M7 7 L10 8 M6 10 L9 11 M5 13 L8 14 M4 16 L7 17" stroke="#603010" stroke-width="0.800"/><path d="M2 8 L22 5 L22.500 7.500 L14 10 L14 19 L11 19 L11 10.500 L2.500 11Z" fill="#b8bcc0" stroke="#505458" stroke-width="0.700"/><path d="M16 10 C18 12 20 14 21 18" fill="none" stroke="#808488" stroke-width="1.500"/></svg>
<svg class="abs" style="left:806px;top:1003px;overflow:visible" width="24" height="24" viewBox="0 0 24 24"><path d="M8 2 L2 22" stroke="#2848d0" stroke-width="2"/><defs><radialGradient id="g35" cx="0.35" cy="0.3" r="0.8"><stop offset="0" stop-color="#f0f4ff"/><stop offset="1" stop-color="#8898d8"/></radialGradient></defs><circle cx="15" cy="13" r="5" fill="url(#g35)"/><text x="12.4" y="16.2" font-family="Liberation Sans,sans-serif" font-weight="bold" font-size="9" fill="#2838a0">?</text></svg>
</div>
</body>
</html>
